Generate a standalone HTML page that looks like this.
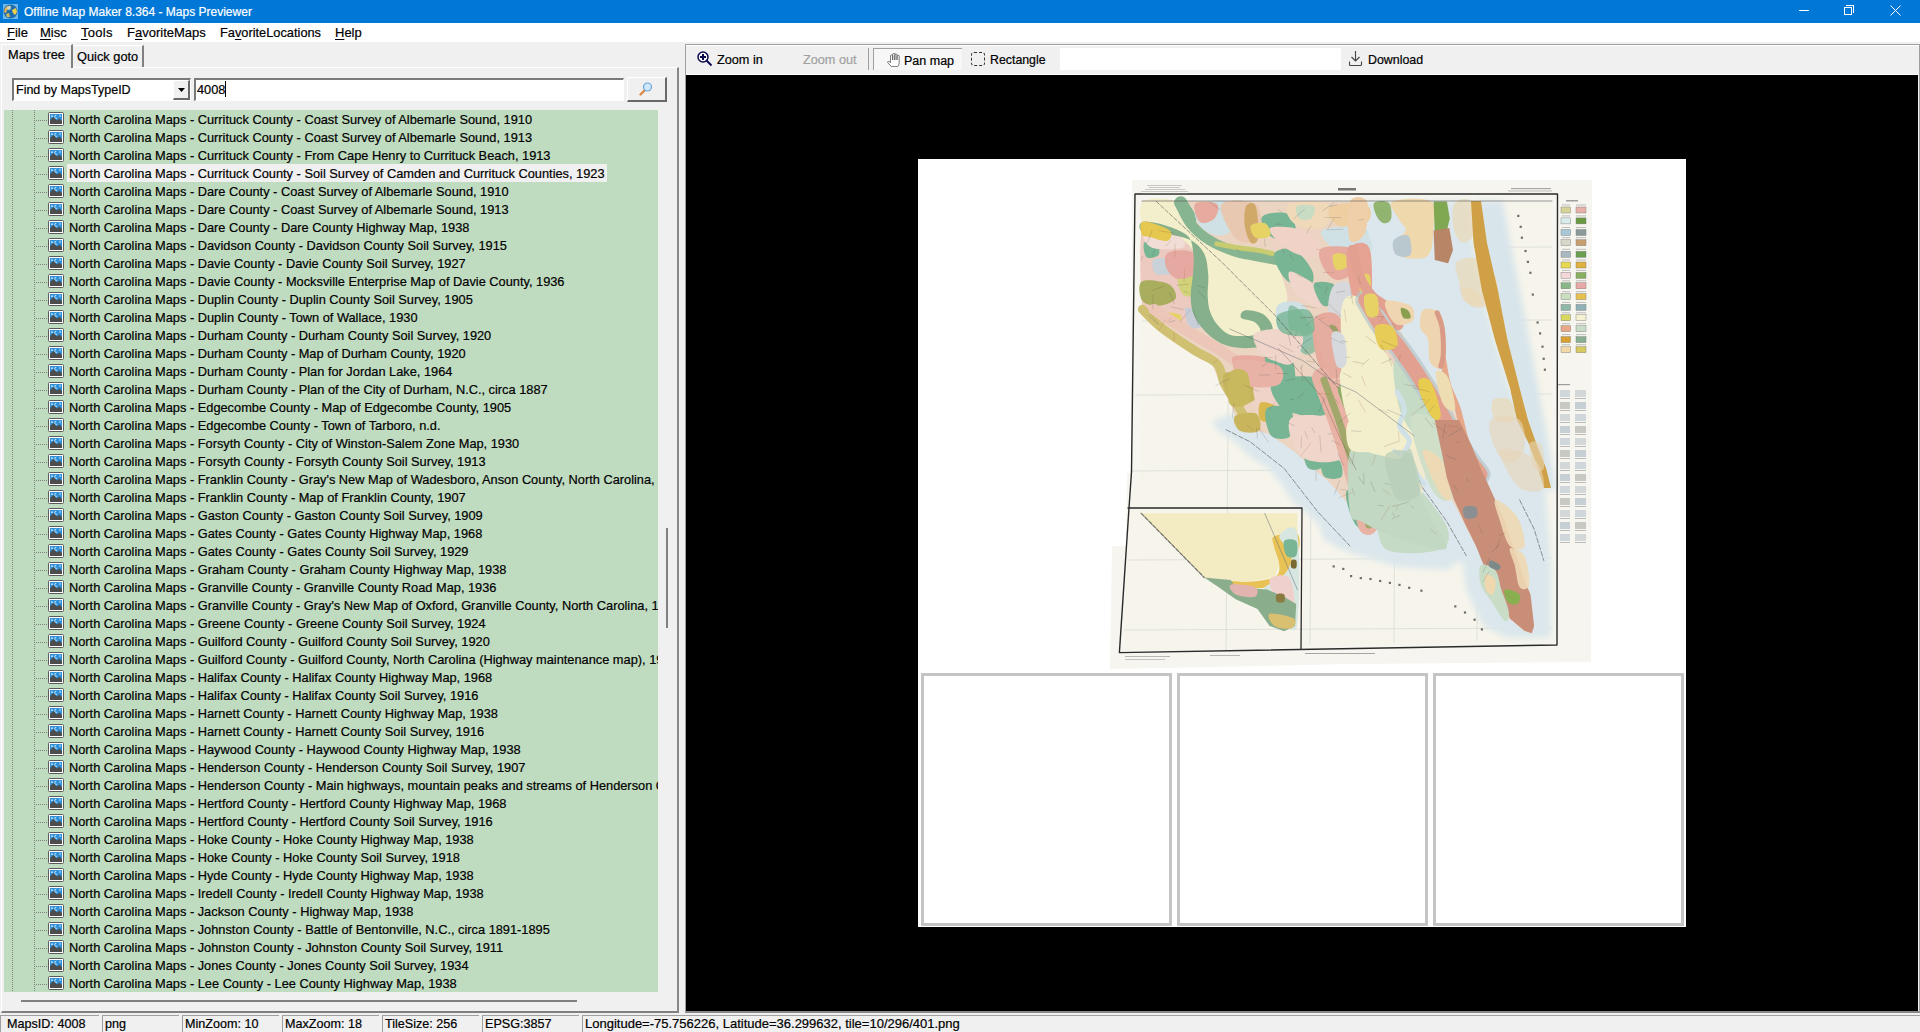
<!DOCTYPE html>
<html><head><meta charset="utf-8">
<style>
*{box-sizing:border-box}
html,body{margin:0;padding:0}
body{width:1920px;height:1032px;overflow:hidden;position:relative;background:#f0f0f0;font-family:"Liberation Sans",sans-serif;font-size:13px;color:#000;-webkit-text-stroke-width:0.2px}
.a{position:absolute}
.t{position:absolute;white-space:nowrap;line-height:16px}
#title{left:0;top:0;width:1920px;height:23px;background:#0078d7}
#menu{left:0;top:23px;width:1920px;height:19px;background:#fff}
.u{text-decoration:underline;text-underline-offset:2px}
.row{position:absolute;left:0;width:654px;height:18px}
.row .hd{position:absolute;left:32px;top:10px;width:12px;height:1px;background-image:linear-gradient(to right,#808080 50%,transparent 50%);background-size:2px 1px}
.row .ic{position:absolute;left:44px;top:1.5px}
.row .tx{position:absolute;left:63px;top:0;height:18px;line-height:20px;padding:0 2px 0 2px;white-space:nowrap;font-size:12.8px}
.row .tx.sel{background:#f0f0f0}
.vd{position:absolute;width:1px;background-image:linear-gradient(to bottom,#808080 50%,transparent 50%);background-size:1px 2px}
.sp{position:absolute;top:1015px;height:17px;border-top:1px solid #a0a0a0;border-left:1px solid #a0a0a0}
.sp span{position:absolute;left:2px;top:0px;line-height:16px;white-space:nowrap;font-size:12.6px}
</style></head><body>

<!-- title bar -->
<div id="title" class="a">
  <svg class="a" style="left:3px;top:4px" width="15" height="15" viewBox="0 0 15 15">
    <rect width="15" height="15" fill="#6fb7e8"/>
    <circle cx="7.5" cy="7.5" r="7" fill="#1f6fae"/>
    <path d="M2 4 Q5 1 8 2 L7 5 L4 6 L3 9 L1 8 Z" fill="#e9b24a"/>
    <path d="M9 6 L13 4 L14 8 L12 11 L10 9 Z" fill="#f2cf4a"/>
    <path d="M3 10 L6 9 L7 13 L4 13 Z" fill="#d9b85a"/>
    <circle cx="6" cy="4" r="2" fill="#bfe3f7" opacity=".7"/>
  </svg>
  <div class="t" style="left:24px;top:4px;color:#fff;font-size:12px">Offline Map Maker 8.364 - Maps Previewer</div>
  <!-- min -->
  <div class="a" style="left:1799px;top:10px;width:10px;height:1px;background:#fff"></div>
  <!-- restore -->
  <div class="a" style="left:1844px;top:7px;width:8px;height:8px;border:1px solid #fff"></div>
  <div class="a" style="left:1846px;top:5px;width:8px;height:8px;border-top:1px solid #fff;border-right:1px solid #fff"></div>
  <!-- close -->
  <svg class="a" style="left:1890px;top:5px" width="11" height="11" viewBox="0 0 11 11"><path d="M0.5 0.5 L10.5 10.5 M10.5 0.5 L0.5 10.5" stroke="#fff" stroke-width="1"/></svg>
</div>

<!-- menu -->
<div id="menu" class="a">
  <div class="t" style="left:7px;top:2px"><span class="u">F</span>ile</div>
  <div class="t" style="left:40px;top:2px"><span class="u">M</span>isc</div>
  <div class="t" style="left:81px;top:2px;letter-spacing:0.3px"><span class="u">T</span>ools</div>
  <div class="t" style="left:127px;top:2px">F<span class="u">a</span>voriteMaps</div>
  <div class="t" style="left:220px;top:2px;font-size:12.8px">Fa<span class="u">v</span>oriteLocations</div>
  <div class="t" style="left:335px;top:2px"><span class="u">H</span>elp</div>
</div>

<!-- left panel: tabs -->
<div class="a" style="left:1px;top:67px;width:678px;height:946px;border-top:1px solid #fff;border-left:1px solid #fff;border-right:2px solid #888;border-bottom:2px solid #808080"></div>
<div class="a" style="left:1px;top:44px;width:72px;height:24px;background:#f0f0f0;border-top:1px solid #fff;border-left:1px solid #fff;border-right:2px solid #808080"></div>
<div class="t" style="left:8px;top:47px;font-size:12.8px">Maps tree</div>
<div class="a" style="left:73px;top:45px;width:71px;height:22px;background:#f0f0f0;border-top:1px solid #fff;border-right:2px solid #808080"></div>
<div class="t" style="left:77px;top:49px;font-size:12.8px">Quick goto</div>

<!-- combo -->
<div class="a" style="left:12px;top:78px;width:179px;height:23px;background:#fff;border-top:2px solid #7a7a7a;border-left:2px solid #7a7a7a;border-bottom:1px solid #fff;border-right:1px solid #fff"></div>
<div class="t" style="left:16px;top:82px;font-size:12.5px">Find by MapsTypeID</div>
<div class="a" style="left:173px;top:80px;width:17px;height:20px;background:#f0f0f0;border-top:1px solid #fff;border-left:1px solid #fff;border-right:2px solid #696969;border-bottom:2px solid #696969"></div>
<svg class="a" style="left:178px;top:88px" width="7" height="4" viewBox="0 0 7 4"><path d="M0 0 H7 L3.5 4 Z" fill="#000"/></svg>
<!-- edit -->
<div class="a" style="left:194px;top:78px;width:430px;height:23px;background:#fff;border-top:2px solid #7a7a7a;border-left:2px solid #7a7a7a;border-bottom:1px solid #fff;border-right:1px solid #fff"></div>
<div class="t" style="left:197px;top:82px;font-size:12.8px">4008</div>
<div class="a" style="left:225px;top:81px;width:1px;height:16px;background:#000"></div>
<!-- search button -->
<div class="a" style="left:627px;top:77px;width:40px;height:25px;background:#f0f0f0;border-top:1px solid #fff;border-left:1px solid #fff;border-right:2px solid #696969;border-bottom:2px solid #696969"></div>
<svg class="a" style="left:638px;top:81px" width="16" height="16" viewBox="0 0 16 16">
  <line x1="2.5" y1="13.5" x2="6.5" y2="9.5" stroke="#d98a4a" stroke-width="2.4" stroke-linecap="round"/>
  <circle cx="9.5" cy="6" r="4" fill="#cfe8fb" stroke="#6aa6d8" stroke-width="1.2"/>
</svg>

<!-- tree -->
<div class="a" style="left:4px;top:110px;width:654px;height:882px;background:#c0dcc0;overflow:hidden">
<div class="vd" style="left:8px;top:0;height:882px"></div>
<div class="vd" style="left:30px;top:0;height:882px"></div>
<div class="row" style="top:0px"><div class="hd" ></div><svg class="ic" width="16" height="14" viewBox="0 0 16 14"><rect x="0.5" y="0.5" width="15" height="13" rx="1" fill="#fff" stroke="#5a5a5a"/><rect x="2" y="2" width="12" height="10" fill="#2f8fd8"/><path d="M2 12 L2 8 L5.5 5 L9 8.5 L11.5 6.5 L14 9 L14 12 Z" fill="#4d4d4d"/><circle cx="4" cy="4.2" r="0.9" fill="#cfeaff"/><path d="M8.3 3.2 a1.6 1.6 0 1 0 0.8 3" fill="none" stroke="#cfeaff" stroke-width="0.9"/><rect x="11.6" y="2.6" width="0.9" height="2.4" fill="#cfeaff"/></svg><span class="tx">North Carolina Maps - Currituck County - Coast Survey of Albemarle Sound, 1910</span></div>
<div class="row" style="top:18px"><div class="hd" ></div><svg class="ic" width="16" height="14" viewBox="0 0 16 14"><rect x="0.5" y="0.5" width="15" height="13" rx="1" fill="#fff" stroke="#5a5a5a"/><rect x="2" y="2" width="12" height="10" fill="#2f8fd8"/><path d="M2 12 L2 8 L5.5 5 L9 8.5 L11.5 6.5 L14 9 L14 12 Z" fill="#4d4d4d"/><circle cx="4" cy="4.2" r="0.9" fill="#cfeaff"/><path d="M8.3 3.2 a1.6 1.6 0 1 0 0.8 3" fill="none" stroke="#cfeaff" stroke-width="0.9"/><rect x="11.6" y="2.6" width="0.9" height="2.4" fill="#cfeaff"/></svg><span class="tx">North Carolina Maps - Currituck County - Coast Survey of Albemarle Sound, 1913</span></div>
<div class="row" style="top:36px"><div class="hd" ></div><svg class="ic" width="16" height="14" viewBox="0 0 16 14"><rect x="0.5" y="0.5" width="15" height="13" rx="1" fill="#fff" stroke="#5a5a5a"/><rect x="2" y="2" width="12" height="10" fill="#2f8fd8"/><path d="M2 12 L2 8 L5.5 5 L9 8.5 L11.5 6.5 L14 9 L14 12 Z" fill="#4d4d4d"/><circle cx="4" cy="4.2" r="0.9" fill="#cfeaff"/><path d="M8.3 3.2 a1.6 1.6 0 1 0 0.8 3" fill="none" stroke="#cfeaff" stroke-width="0.9"/><rect x="11.6" y="2.6" width="0.9" height="2.4" fill="#cfeaff"/></svg><span class="tx">North Carolina Maps - Currituck County - From Cape Henry to Currituck Beach, 1913</span></div>
<div class="row" style="top:54px"><div class="hd" ></div><svg class="ic" width="16" height="14" viewBox="0 0 16 14"><rect x="0.5" y="0.5" width="15" height="13" rx="1" fill="#fff" stroke="#5a5a5a"/><rect x="2" y="2" width="12" height="10" fill="#2f8fd8"/><path d="M2 12 L2 8 L5.5 5 L9 8.5 L11.5 6.5 L14 9 L14 12 Z" fill="#4d4d4d"/><circle cx="4" cy="4.2" r="0.9" fill="#cfeaff"/><path d="M8.3 3.2 a1.6 1.6 0 1 0 0.8 3" fill="none" stroke="#cfeaff" stroke-width="0.9"/><rect x="11.6" y="2.6" width="0.9" height="2.4" fill="#cfeaff"/></svg><span class="tx sel">North Carolina Maps - Currituck County - Soil Survey of Camden and Currituck Counties, 1923</span></div>
<div class="row" style="top:72px"><div class="hd" ></div><svg class="ic" width="16" height="14" viewBox="0 0 16 14"><rect x="0.5" y="0.5" width="15" height="13" rx="1" fill="#fff" stroke="#5a5a5a"/><rect x="2" y="2" width="12" height="10" fill="#2f8fd8"/><path d="M2 12 L2 8 L5.5 5 L9 8.5 L11.5 6.5 L14 9 L14 12 Z" fill="#4d4d4d"/><circle cx="4" cy="4.2" r="0.9" fill="#cfeaff"/><path d="M8.3 3.2 a1.6 1.6 0 1 0 0.8 3" fill="none" stroke="#cfeaff" stroke-width="0.9"/><rect x="11.6" y="2.6" width="0.9" height="2.4" fill="#cfeaff"/></svg><span class="tx">North Carolina Maps - Dare County - Coast Survey of Albemarle Sound, 1910</span></div>
<div class="row" style="top:90px"><div class="hd" ></div><svg class="ic" width="16" height="14" viewBox="0 0 16 14"><rect x="0.5" y="0.5" width="15" height="13" rx="1" fill="#fff" stroke="#5a5a5a"/><rect x="2" y="2" width="12" height="10" fill="#2f8fd8"/><path d="M2 12 L2 8 L5.5 5 L9 8.5 L11.5 6.5 L14 9 L14 12 Z" fill="#4d4d4d"/><circle cx="4" cy="4.2" r="0.9" fill="#cfeaff"/><path d="M8.3 3.2 a1.6 1.6 0 1 0 0.8 3" fill="none" stroke="#cfeaff" stroke-width="0.9"/><rect x="11.6" y="2.6" width="0.9" height="2.4" fill="#cfeaff"/></svg><span class="tx">North Carolina Maps - Dare County - Coast Survey of Albemarle Sound, 1913</span></div>
<div class="row" style="top:108px"><div class="hd" ></div><svg class="ic" width="16" height="14" viewBox="0 0 16 14"><rect x="0.5" y="0.5" width="15" height="13" rx="1" fill="#fff" stroke="#5a5a5a"/><rect x="2" y="2" width="12" height="10" fill="#2f8fd8"/><path d="M2 12 L2 8 L5.5 5 L9 8.5 L11.5 6.5 L14 9 L14 12 Z" fill="#4d4d4d"/><circle cx="4" cy="4.2" r="0.9" fill="#cfeaff"/><path d="M8.3 3.2 a1.6 1.6 0 1 0 0.8 3" fill="none" stroke="#cfeaff" stroke-width="0.9"/><rect x="11.6" y="2.6" width="0.9" height="2.4" fill="#cfeaff"/></svg><span class="tx">North Carolina Maps - Dare County - Dare County Highway Map, 1938</span></div>
<div class="row" style="top:126px"><div class="hd" ></div><svg class="ic" width="16" height="14" viewBox="0 0 16 14"><rect x="0.5" y="0.5" width="15" height="13" rx="1" fill="#fff" stroke="#5a5a5a"/><rect x="2" y="2" width="12" height="10" fill="#2f8fd8"/><path d="M2 12 L2 8 L5.5 5 L9 8.5 L11.5 6.5 L14 9 L14 12 Z" fill="#4d4d4d"/><circle cx="4" cy="4.2" r="0.9" fill="#cfeaff"/><path d="M8.3 3.2 a1.6 1.6 0 1 0 0.8 3" fill="none" stroke="#cfeaff" stroke-width="0.9"/><rect x="11.6" y="2.6" width="0.9" height="2.4" fill="#cfeaff"/></svg><span class="tx">North Carolina Maps - Davidson County - Davidson County Soil Survey, 1915</span></div>
<div class="row" style="top:144px"><div class="hd" ></div><svg class="ic" width="16" height="14" viewBox="0 0 16 14"><rect x="0.5" y="0.5" width="15" height="13" rx="1" fill="#fff" stroke="#5a5a5a"/><rect x="2" y="2" width="12" height="10" fill="#2f8fd8"/><path d="M2 12 L2 8 L5.5 5 L9 8.5 L11.5 6.5 L14 9 L14 12 Z" fill="#4d4d4d"/><circle cx="4" cy="4.2" r="0.9" fill="#cfeaff"/><path d="M8.3 3.2 a1.6 1.6 0 1 0 0.8 3" fill="none" stroke="#cfeaff" stroke-width="0.9"/><rect x="11.6" y="2.6" width="0.9" height="2.4" fill="#cfeaff"/></svg><span class="tx">North Carolina Maps - Davie County - Davie County Soil Survey, 1927</span></div>
<div class="row" style="top:162px"><div class="hd" ></div><svg class="ic" width="16" height="14" viewBox="0 0 16 14"><rect x="0.5" y="0.5" width="15" height="13" rx="1" fill="#fff" stroke="#5a5a5a"/><rect x="2" y="2" width="12" height="10" fill="#2f8fd8"/><path d="M2 12 L2 8 L5.5 5 L9 8.5 L11.5 6.5 L14 9 L14 12 Z" fill="#4d4d4d"/><circle cx="4" cy="4.2" r="0.9" fill="#cfeaff"/><path d="M8.3 3.2 a1.6 1.6 0 1 0 0.8 3" fill="none" stroke="#cfeaff" stroke-width="0.9"/><rect x="11.6" y="2.6" width="0.9" height="2.4" fill="#cfeaff"/></svg><span class="tx">North Carolina Maps - Davie County - Mocksville Enterprise Map of Davie County, 1936</span></div>
<div class="row" style="top:180px"><div class="hd" ></div><svg class="ic" width="16" height="14" viewBox="0 0 16 14"><rect x="0.5" y="0.5" width="15" height="13" rx="1" fill="#fff" stroke="#5a5a5a"/><rect x="2" y="2" width="12" height="10" fill="#2f8fd8"/><path d="M2 12 L2 8 L5.5 5 L9 8.5 L11.5 6.5 L14 9 L14 12 Z" fill="#4d4d4d"/><circle cx="4" cy="4.2" r="0.9" fill="#cfeaff"/><path d="M8.3 3.2 a1.6 1.6 0 1 0 0.8 3" fill="none" stroke="#cfeaff" stroke-width="0.9"/><rect x="11.6" y="2.6" width="0.9" height="2.4" fill="#cfeaff"/></svg><span class="tx">North Carolina Maps - Duplin County - Duplin County Soil Survey, 1905</span></div>
<div class="row" style="top:198px"><div class="hd" ></div><svg class="ic" width="16" height="14" viewBox="0 0 16 14"><rect x="0.5" y="0.5" width="15" height="13" rx="1" fill="#fff" stroke="#5a5a5a"/><rect x="2" y="2" width="12" height="10" fill="#2f8fd8"/><path d="M2 12 L2 8 L5.5 5 L9 8.5 L11.5 6.5 L14 9 L14 12 Z" fill="#4d4d4d"/><circle cx="4" cy="4.2" r="0.9" fill="#cfeaff"/><path d="M8.3 3.2 a1.6 1.6 0 1 0 0.8 3" fill="none" stroke="#cfeaff" stroke-width="0.9"/><rect x="11.6" y="2.6" width="0.9" height="2.4" fill="#cfeaff"/></svg><span class="tx">North Carolina Maps - Duplin County - Town of Wallace, 1930</span></div>
<div class="row" style="top:216px"><div class="hd" ></div><svg class="ic" width="16" height="14" viewBox="0 0 16 14"><rect x="0.5" y="0.5" width="15" height="13" rx="1" fill="#fff" stroke="#5a5a5a"/><rect x="2" y="2" width="12" height="10" fill="#2f8fd8"/><path d="M2 12 L2 8 L5.5 5 L9 8.5 L11.5 6.5 L14 9 L14 12 Z" fill="#4d4d4d"/><circle cx="4" cy="4.2" r="0.9" fill="#cfeaff"/><path d="M8.3 3.2 a1.6 1.6 0 1 0 0.8 3" fill="none" stroke="#cfeaff" stroke-width="0.9"/><rect x="11.6" y="2.6" width="0.9" height="2.4" fill="#cfeaff"/></svg><span class="tx">North Carolina Maps - Durham County - Durham County Soil Survey, 1920</span></div>
<div class="row" style="top:234px"><div class="hd" ></div><svg class="ic" width="16" height="14" viewBox="0 0 16 14"><rect x="0.5" y="0.5" width="15" height="13" rx="1" fill="#fff" stroke="#5a5a5a"/><rect x="2" y="2" width="12" height="10" fill="#2f8fd8"/><path d="M2 12 L2 8 L5.5 5 L9 8.5 L11.5 6.5 L14 9 L14 12 Z" fill="#4d4d4d"/><circle cx="4" cy="4.2" r="0.9" fill="#cfeaff"/><path d="M8.3 3.2 a1.6 1.6 0 1 0 0.8 3" fill="none" stroke="#cfeaff" stroke-width="0.9"/><rect x="11.6" y="2.6" width="0.9" height="2.4" fill="#cfeaff"/></svg><span class="tx">North Carolina Maps - Durham County - Map of Durham County, 1920</span></div>
<div class="row" style="top:252px"><div class="hd" ></div><svg class="ic" width="16" height="14" viewBox="0 0 16 14"><rect x="0.5" y="0.5" width="15" height="13" rx="1" fill="#fff" stroke="#5a5a5a"/><rect x="2" y="2" width="12" height="10" fill="#2f8fd8"/><path d="M2 12 L2 8 L5.5 5 L9 8.5 L11.5 6.5 L14 9 L14 12 Z" fill="#4d4d4d"/><circle cx="4" cy="4.2" r="0.9" fill="#cfeaff"/><path d="M8.3 3.2 a1.6 1.6 0 1 0 0.8 3" fill="none" stroke="#cfeaff" stroke-width="0.9"/><rect x="11.6" y="2.6" width="0.9" height="2.4" fill="#cfeaff"/></svg><span class="tx">North Carolina Maps - Durham County - Plan for Jordan Lake, 1964</span></div>
<div class="row" style="top:270px"><div class="hd" ></div><svg class="ic" width="16" height="14" viewBox="0 0 16 14"><rect x="0.5" y="0.5" width="15" height="13" rx="1" fill="#fff" stroke="#5a5a5a"/><rect x="2" y="2" width="12" height="10" fill="#2f8fd8"/><path d="M2 12 L2 8 L5.5 5 L9 8.5 L11.5 6.5 L14 9 L14 12 Z" fill="#4d4d4d"/><circle cx="4" cy="4.2" r="0.9" fill="#cfeaff"/><path d="M8.3 3.2 a1.6 1.6 0 1 0 0.8 3" fill="none" stroke="#cfeaff" stroke-width="0.9"/><rect x="11.6" y="2.6" width="0.9" height="2.4" fill="#cfeaff"/></svg><span class="tx">North Carolina Maps - Durham County - Plan of the City of Durham, N.C., circa 1887</span></div>
<div class="row" style="top:288px"><div class="hd" ></div><svg class="ic" width="16" height="14" viewBox="0 0 16 14"><rect x="0.5" y="0.5" width="15" height="13" rx="1" fill="#fff" stroke="#5a5a5a"/><rect x="2" y="2" width="12" height="10" fill="#2f8fd8"/><path d="M2 12 L2 8 L5.5 5 L9 8.5 L11.5 6.5 L14 9 L14 12 Z" fill="#4d4d4d"/><circle cx="4" cy="4.2" r="0.9" fill="#cfeaff"/><path d="M8.3 3.2 a1.6 1.6 0 1 0 0.8 3" fill="none" stroke="#cfeaff" stroke-width="0.9"/><rect x="11.6" y="2.6" width="0.9" height="2.4" fill="#cfeaff"/></svg><span class="tx">North Carolina Maps - Edgecombe County - Map of Edgecombe County, 1905</span></div>
<div class="row" style="top:306px"><div class="hd" ></div><svg class="ic" width="16" height="14" viewBox="0 0 16 14"><rect x="0.5" y="0.5" width="15" height="13" rx="1" fill="#fff" stroke="#5a5a5a"/><rect x="2" y="2" width="12" height="10" fill="#2f8fd8"/><path d="M2 12 L2 8 L5.5 5 L9 8.5 L11.5 6.5 L14 9 L14 12 Z" fill="#4d4d4d"/><circle cx="4" cy="4.2" r="0.9" fill="#cfeaff"/><path d="M8.3 3.2 a1.6 1.6 0 1 0 0.8 3" fill="none" stroke="#cfeaff" stroke-width="0.9"/><rect x="11.6" y="2.6" width="0.9" height="2.4" fill="#cfeaff"/></svg><span class="tx">North Carolina Maps - Edgecombe County - Town of Tarboro, n.d.</span></div>
<div class="row" style="top:324px"><div class="hd" ></div><svg class="ic" width="16" height="14" viewBox="0 0 16 14"><rect x="0.5" y="0.5" width="15" height="13" rx="1" fill="#fff" stroke="#5a5a5a"/><rect x="2" y="2" width="12" height="10" fill="#2f8fd8"/><path d="M2 12 L2 8 L5.5 5 L9 8.5 L11.5 6.5 L14 9 L14 12 Z" fill="#4d4d4d"/><circle cx="4" cy="4.2" r="0.9" fill="#cfeaff"/><path d="M8.3 3.2 a1.6 1.6 0 1 0 0.8 3" fill="none" stroke="#cfeaff" stroke-width="0.9"/><rect x="11.6" y="2.6" width="0.9" height="2.4" fill="#cfeaff"/></svg><span class="tx">North Carolina Maps - Forsyth County - City of Winston-Salem Zone Map, 1930</span></div>
<div class="row" style="top:342px"><div class="hd" ></div><svg class="ic" width="16" height="14" viewBox="0 0 16 14"><rect x="0.5" y="0.5" width="15" height="13" rx="1" fill="#fff" stroke="#5a5a5a"/><rect x="2" y="2" width="12" height="10" fill="#2f8fd8"/><path d="M2 12 L2 8 L5.5 5 L9 8.5 L11.5 6.5 L14 9 L14 12 Z" fill="#4d4d4d"/><circle cx="4" cy="4.2" r="0.9" fill="#cfeaff"/><path d="M8.3 3.2 a1.6 1.6 0 1 0 0.8 3" fill="none" stroke="#cfeaff" stroke-width="0.9"/><rect x="11.6" y="2.6" width="0.9" height="2.4" fill="#cfeaff"/></svg><span class="tx">North Carolina Maps - Forsyth County - Forsyth County Soil Survey, 1913</span></div>
<div class="row" style="top:360px"><div class="hd" ></div><svg class="ic" width="16" height="14" viewBox="0 0 16 14"><rect x="0.5" y="0.5" width="15" height="13" rx="1" fill="#fff" stroke="#5a5a5a"/><rect x="2" y="2" width="12" height="10" fill="#2f8fd8"/><path d="M2 12 L2 8 L5.5 5 L9 8.5 L11.5 6.5 L14 9 L14 12 Z" fill="#4d4d4d"/><circle cx="4" cy="4.2" r="0.9" fill="#cfeaff"/><path d="M8.3 3.2 a1.6 1.6 0 1 0 0.8 3" fill="none" stroke="#cfeaff" stroke-width="0.9"/><rect x="11.6" y="2.6" width="0.9" height="2.4" fill="#cfeaff"/></svg><span class="tx">North Carolina Maps - Franklin County - Gray&#x27;s New Map of Wadesboro, Anson County, North Carolina, 1880</span></div>
<div class="row" style="top:378px"><div class="hd" ></div><svg class="ic" width="16" height="14" viewBox="0 0 16 14"><rect x="0.5" y="0.5" width="15" height="13" rx="1" fill="#fff" stroke="#5a5a5a"/><rect x="2" y="2" width="12" height="10" fill="#2f8fd8"/><path d="M2 12 L2 8 L5.5 5 L9 8.5 L11.5 6.5 L14 9 L14 12 Z" fill="#4d4d4d"/><circle cx="4" cy="4.2" r="0.9" fill="#cfeaff"/><path d="M8.3 3.2 a1.6 1.6 0 1 0 0.8 3" fill="none" stroke="#cfeaff" stroke-width="0.9"/><rect x="11.6" y="2.6" width="0.9" height="2.4" fill="#cfeaff"/></svg><span class="tx">North Carolina Maps - Franklin County - Map of Franklin County, 1907</span></div>
<div class="row" style="top:396px"><div class="hd" ></div><svg class="ic" width="16" height="14" viewBox="0 0 16 14"><rect x="0.5" y="0.5" width="15" height="13" rx="1" fill="#fff" stroke="#5a5a5a"/><rect x="2" y="2" width="12" height="10" fill="#2f8fd8"/><path d="M2 12 L2 8 L5.5 5 L9 8.5 L11.5 6.5 L14 9 L14 12 Z" fill="#4d4d4d"/><circle cx="4" cy="4.2" r="0.9" fill="#cfeaff"/><path d="M8.3 3.2 a1.6 1.6 0 1 0 0.8 3" fill="none" stroke="#cfeaff" stroke-width="0.9"/><rect x="11.6" y="2.6" width="0.9" height="2.4" fill="#cfeaff"/></svg><span class="tx">North Carolina Maps - Gaston County - Gaston County Soil Survey, 1909</span></div>
<div class="row" style="top:414px"><div class="hd" ></div><svg class="ic" width="16" height="14" viewBox="0 0 16 14"><rect x="0.5" y="0.5" width="15" height="13" rx="1" fill="#fff" stroke="#5a5a5a"/><rect x="2" y="2" width="12" height="10" fill="#2f8fd8"/><path d="M2 12 L2 8 L5.5 5 L9 8.5 L11.5 6.5 L14 9 L14 12 Z" fill="#4d4d4d"/><circle cx="4" cy="4.2" r="0.9" fill="#cfeaff"/><path d="M8.3 3.2 a1.6 1.6 0 1 0 0.8 3" fill="none" stroke="#cfeaff" stroke-width="0.9"/><rect x="11.6" y="2.6" width="0.9" height="2.4" fill="#cfeaff"/></svg><span class="tx">North Carolina Maps - Gates County - Gates County Highway Map, 1968</span></div>
<div class="row" style="top:432px"><div class="hd" ></div><svg class="ic" width="16" height="14" viewBox="0 0 16 14"><rect x="0.5" y="0.5" width="15" height="13" rx="1" fill="#fff" stroke="#5a5a5a"/><rect x="2" y="2" width="12" height="10" fill="#2f8fd8"/><path d="M2 12 L2 8 L5.5 5 L9 8.5 L11.5 6.5 L14 9 L14 12 Z" fill="#4d4d4d"/><circle cx="4" cy="4.2" r="0.9" fill="#cfeaff"/><path d="M8.3 3.2 a1.6 1.6 0 1 0 0.8 3" fill="none" stroke="#cfeaff" stroke-width="0.9"/><rect x="11.6" y="2.6" width="0.9" height="2.4" fill="#cfeaff"/></svg><span class="tx">North Carolina Maps - Gates County - Gates County Soil Survey, 1929</span></div>
<div class="row" style="top:450px"><div class="hd" ></div><svg class="ic" width="16" height="14" viewBox="0 0 16 14"><rect x="0.5" y="0.5" width="15" height="13" rx="1" fill="#fff" stroke="#5a5a5a"/><rect x="2" y="2" width="12" height="10" fill="#2f8fd8"/><path d="M2 12 L2 8 L5.5 5 L9 8.5 L11.5 6.5 L14 9 L14 12 Z" fill="#4d4d4d"/><circle cx="4" cy="4.2" r="0.9" fill="#cfeaff"/><path d="M8.3 3.2 a1.6 1.6 0 1 0 0.8 3" fill="none" stroke="#cfeaff" stroke-width="0.9"/><rect x="11.6" y="2.6" width="0.9" height="2.4" fill="#cfeaff"/></svg><span class="tx">North Carolina Maps - Graham County - Graham County Highway Map, 1938</span></div>
<div class="row" style="top:468px"><div class="hd" ></div><svg class="ic" width="16" height="14" viewBox="0 0 16 14"><rect x="0.5" y="0.5" width="15" height="13" rx="1" fill="#fff" stroke="#5a5a5a"/><rect x="2" y="2" width="12" height="10" fill="#2f8fd8"/><path d="M2 12 L2 8 L5.5 5 L9 8.5 L11.5 6.5 L14 9 L14 12 Z" fill="#4d4d4d"/><circle cx="4" cy="4.2" r="0.9" fill="#cfeaff"/><path d="M8.3 3.2 a1.6 1.6 0 1 0 0.8 3" fill="none" stroke="#cfeaff" stroke-width="0.9"/><rect x="11.6" y="2.6" width="0.9" height="2.4" fill="#cfeaff"/></svg><span class="tx">North Carolina Maps - Granville County - Granville County Road Map, 1936</span></div>
<div class="row" style="top:486px"><div class="hd" ></div><svg class="ic" width="16" height="14" viewBox="0 0 16 14"><rect x="0.5" y="0.5" width="15" height="13" rx="1" fill="#fff" stroke="#5a5a5a"/><rect x="2" y="2" width="12" height="10" fill="#2f8fd8"/><path d="M2 12 L2 8 L5.5 5 L9 8.5 L11.5 6.5 L14 9 L14 12 Z" fill="#4d4d4d"/><circle cx="4" cy="4.2" r="0.9" fill="#cfeaff"/><path d="M8.3 3.2 a1.6 1.6 0 1 0 0.8 3" fill="none" stroke="#cfeaff" stroke-width="0.9"/><rect x="11.6" y="2.6" width="0.9" height="2.4" fill="#cfeaff"/></svg><span class="tx">North Carolina Maps - Granville County - Gray&#x27;s New Map of Oxford, Granville County, North Carolina, 1886</span></div>
<div class="row" style="top:504px"><div class="hd" ></div><svg class="ic" width="16" height="14" viewBox="0 0 16 14"><rect x="0.5" y="0.5" width="15" height="13" rx="1" fill="#fff" stroke="#5a5a5a"/><rect x="2" y="2" width="12" height="10" fill="#2f8fd8"/><path d="M2 12 L2 8 L5.5 5 L9 8.5 L11.5 6.5 L14 9 L14 12 Z" fill="#4d4d4d"/><circle cx="4" cy="4.2" r="0.9" fill="#cfeaff"/><path d="M8.3 3.2 a1.6 1.6 0 1 0 0.8 3" fill="none" stroke="#cfeaff" stroke-width="0.9"/><rect x="11.6" y="2.6" width="0.9" height="2.4" fill="#cfeaff"/></svg><span class="tx">North Carolina Maps - Greene County - Greene County Soil Survey, 1924</span></div>
<div class="row" style="top:522px"><div class="hd" ></div><svg class="ic" width="16" height="14" viewBox="0 0 16 14"><rect x="0.5" y="0.5" width="15" height="13" rx="1" fill="#fff" stroke="#5a5a5a"/><rect x="2" y="2" width="12" height="10" fill="#2f8fd8"/><path d="M2 12 L2 8 L5.5 5 L9 8.5 L11.5 6.5 L14 9 L14 12 Z" fill="#4d4d4d"/><circle cx="4" cy="4.2" r="0.9" fill="#cfeaff"/><path d="M8.3 3.2 a1.6 1.6 0 1 0 0.8 3" fill="none" stroke="#cfeaff" stroke-width="0.9"/><rect x="11.6" y="2.6" width="0.9" height="2.4" fill="#cfeaff"/></svg><span class="tx">North Carolina Maps - Guilford County - Guilford County Soil Survey, 1920</span></div>
<div class="row" style="top:540px"><div class="hd" ></div><svg class="ic" width="16" height="14" viewBox="0 0 16 14"><rect x="0.5" y="0.5" width="15" height="13" rx="1" fill="#fff" stroke="#5a5a5a"/><rect x="2" y="2" width="12" height="10" fill="#2f8fd8"/><path d="M2 12 L2 8 L5.5 5 L9 8.5 L11.5 6.5 L14 9 L14 12 Z" fill="#4d4d4d"/><circle cx="4" cy="4.2" r="0.9" fill="#cfeaff"/><path d="M8.3 3.2 a1.6 1.6 0 1 0 0.8 3" fill="none" stroke="#cfeaff" stroke-width="0.9"/><rect x="11.6" y="2.6" width="0.9" height="2.4" fill="#cfeaff"/></svg><span class="tx">North Carolina Maps - Guilford County - Guilford County, North Carolina (Highway maintenance map), 1938</span></div>
<div class="row" style="top:558px"><div class="hd" ></div><svg class="ic" width="16" height="14" viewBox="0 0 16 14"><rect x="0.5" y="0.5" width="15" height="13" rx="1" fill="#fff" stroke="#5a5a5a"/><rect x="2" y="2" width="12" height="10" fill="#2f8fd8"/><path d="M2 12 L2 8 L5.5 5 L9 8.5 L11.5 6.5 L14 9 L14 12 Z" fill="#4d4d4d"/><circle cx="4" cy="4.2" r="0.9" fill="#cfeaff"/><path d="M8.3 3.2 a1.6 1.6 0 1 0 0.8 3" fill="none" stroke="#cfeaff" stroke-width="0.9"/><rect x="11.6" y="2.6" width="0.9" height="2.4" fill="#cfeaff"/></svg><span class="tx">North Carolina Maps - Halifax County - Halifax County Highway Map, 1968</span></div>
<div class="row" style="top:576px"><div class="hd" ></div><svg class="ic" width="16" height="14" viewBox="0 0 16 14"><rect x="0.5" y="0.5" width="15" height="13" rx="1" fill="#fff" stroke="#5a5a5a"/><rect x="2" y="2" width="12" height="10" fill="#2f8fd8"/><path d="M2 12 L2 8 L5.5 5 L9 8.5 L11.5 6.5 L14 9 L14 12 Z" fill="#4d4d4d"/><circle cx="4" cy="4.2" r="0.9" fill="#cfeaff"/><path d="M8.3 3.2 a1.6 1.6 0 1 0 0.8 3" fill="none" stroke="#cfeaff" stroke-width="0.9"/><rect x="11.6" y="2.6" width="0.9" height="2.4" fill="#cfeaff"/></svg><span class="tx">North Carolina Maps - Halifax County - Halifax County Soil Survey, 1916</span></div>
<div class="row" style="top:594px"><div class="hd" ></div><svg class="ic" width="16" height="14" viewBox="0 0 16 14"><rect x="0.5" y="0.5" width="15" height="13" rx="1" fill="#fff" stroke="#5a5a5a"/><rect x="2" y="2" width="12" height="10" fill="#2f8fd8"/><path d="M2 12 L2 8 L5.5 5 L9 8.5 L11.5 6.5 L14 9 L14 12 Z" fill="#4d4d4d"/><circle cx="4" cy="4.2" r="0.9" fill="#cfeaff"/><path d="M8.3 3.2 a1.6 1.6 0 1 0 0.8 3" fill="none" stroke="#cfeaff" stroke-width="0.9"/><rect x="11.6" y="2.6" width="0.9" height="2.4" fill="#cfeaff"/></svg><span class="tx">North Carolina Maps - Harnett County - Harnett County Highway Map, 1938</span></div>
<div class="row" style="top:612px"><div class="hd" ></div><svg class="ic" width="16" height="14" viewBox="0 0 16 14"><rect x="0.5" y="0.5" width="15" height="13" rx="1" fill="#fff" stroke="#5a5a5a"/><rect x="2" y="2" width="12" height="10" fill="#2f8fd8"/><path d="M2 12 L2 8 L5.5 5 L9 8.5 L11.5 6.5 L14 9 L14 12 Z" fill="#4d4d4d"/><circle cx="4" cy="4.2" r="0.9" fill="#cfeaff"/><path d="M8.3 3.2 a1.6 1.6 0 1 0 0.8 3" fill="none" stroke="#cfeaff" stroke-width="0.9"/><rect x="11.6" y="2.6" width="0.9" height="2.4" fill="#cfeaff"/></svg><span class="tx">North Carolina Maps - Harnett County - Harnett County Soil Survey, 1916</span></div>
<div class="row" style="top:630px"><div class="hd" ></div><svg class="ic" width="16" height="14" viewBox="0 0 16 14"><rect x="0.5" y="0.5" width="15" height="13" rx="1" fill="#fff" stroke="#5a5a5a"/><rect x="2" y="2" width="12" height="10" fill="#2f8fd8"/><path d="M2 12 L2 8 L5.5 5 L9 8.5 L11.5 6.5 L14 9 L14 12 Z" fill="#4d4d4d"/><circle cx="4" cy="4.2" r="0.9" fill="#cfeaff"/><path d="M8.3 3.2 a1.6 1.6 0 1 0 0.8 3" fill="none" stroke="#cfeaff" stroke-width="0.9"/><rect x="11.6" y="2.6" width="0.9" height="2.4" fill="#cfeaff"/></svg><span class="tx">North Carolina Maps - Haywood County - Haywood County Highway Map, 1938</span></div>
<div class="row" style="top:648px"><div class="hd" ></div><svg class="ic" width="16" height="14" viewBox="0 0 16 14"><rect x="0.5" y="0.5" width="15" height="13" rx="1" fill="#fff" stroke="#5a5a5a"/><rect x="2" y="2" width="12" height="10" fill="#2f8fd8"/><path d="M2 12 L2 8 L5.5 5 L9 8.5 L11.5 6.5 L14 9 L14 12 Z" fill="#4d4d4d"/><circle cx="4" cy="4.2" r="0.9" fill="#cfeaff"/><path d="M8.3 3.2 a1.6 1.6 0 1 0 0.8 3" fill="none" stroke="#cfeaff" stroke-width="0.9"/><rect x="11.6" y="2.6" width="0.9" height="2.4" fill="#cfeaff"/></svg><span class="tx">North Carolina Maps - Henderson County - Henderson County Soil Survey, 1907</span></div>
<div class="row" style="top:666px"><div class="hd" ></div><svg class="ic" width="16" height="14" viewBox="0 0 16 14"><rect x="0.5" y="0.5" width="15" height="13" rx="1" fill="#fff" stroke="#5a5a5a"/><rect x="2" y="2" width="12" height="10" fill="#2f8fd8"/><path d="M2 12 L2 8 L5.5 5 L9 8.5 L11.5 6.5 L14 9 L14 12 Z" fill="#4d4d4d"/><circle cx="4" cy="4.2" r="0.9" fill="#cfeaff"/><path d="M8.3 3.2 a1.6 1.6 0 1 0 0.8 3" fill="none" stroke="#cfeaff" stroke-width="0.9"/><rect x="11.6" y="2.6" width="0.9" height="2.4" fill="#cfeaff"/></svg><span class="tx">North Carolina Maps - Henderson County - Main highways, mountain peaks and streams of Henderson County</span></div>
<div class="row" style="top:684px"><div class="hd" ></div><svg class="ic" width="16" height="14" viewBox="0 0 16 14"><rect x="0.5" y="0.5" width="15" height="13" rx="1" fill="#fff" stroke="#5a5a5a"/><rect x="2" y="2" width="12" height="10" fill="#2f8fd8"/><path d="M2 12 L2 8 L5.5 5 L9 8.5 L11.5 6.5 L14 9 L14 12 Z" fill="#4d4d4d"/><circle cx="4" cy="4.2" r="0.9" fill="#cfeaff"/><path d="M8.3 3.2 a1.6 1.6 0 1 0 0.8 3" fill="none" stroke="#cfeaff" stroke-width="0.9"/><rect x="11.6" y="2.6" width="0.9" height="2.4" fill="#cfeaff"/></svg><span class="tx">North Carolina Maps - Hertford County - Hertford County Highway Map, 1968</span></div>
<div class="row" style="top:702px"><div class="hd" ></div><svg class="ic" width="16" height="14" viewBox="0 0 16 14"><rect x="0.5" y="0.5" width="15" height="13" rx="1" fill="#fff" stroke="#5a5a5a"/><rect x="2" y="2" width="12" height="10" fill="#2f8fd8"/><path d="M2 12 L2 8 L5.5 5 L9 8.5 L11.5 6.5 L14 9 L14 12 Z" fill="#4d4d4d"/><circle cx="4" cy="4.2" r="0.9" fill="#cfeaff"/><path d="M8.3 3.2 a1.6 1.6 0 1 0 0.8 3" fill="none" stroke="#cfeaff" stroke-width="0.9"/><rect x="11.6" y="2.6" width="0.9" height="2.4" fill="#cfeaff"/></svg><span class="tx">North Carolina Maps - Hertford County - Hertford County Soil Survey, 1916</span></div>
<div class="row" style="top:720px"><div class="hd" ></div><svg class="ic" width="16" height="14" viewBox="0 0 16 14"><rect x="0.5" y="0.5" width="15" height="13" rx="1" fill="#fff" stroke="#5a5a5a"/><rect x="2" y="2" width="12" height="10" fill="#2f8fd8"/><path d="M2 12 L2 8 L5.5 5 L9 8.5 L11.5 6.5 L14 9 L14 12 Z" fill="#4d4d4d"/><circle cx="4" cy="4.2" r="0.9" fill="#cfeaff"/><path d="M8.3 3.2 a1.6 1.6 0 1 0 0.8 3" fill="none" stroke="#cfeaff" stroke-width="0.9"/><rect x="11.6" y="2.6" width="0.9" height="2.4" fill="#cfeaff"/></svg><span class="tx">North Carolina Maps - Hoke County - Hoke County Highway Map, 1938</span></div>
<div class="row" style="top:738px"><div class="hd" ></div><svg class="ic" width="16" height="14" viewBox="0 0 16 14"><rect x="0.5" y="0.5" width="15" height="13" rx="1" fill="#fff" stroke="#5a5a5a"/><rect x="2" y="2" width="12" height="10" fill="#2f8fd8"/><path d="M2 12 L2 8 L5.5 5 L9 8.5 L11.5 6.5 L14 9 L14 12 Z" fill="#4d4d4d"/><circle cx="4" cy="4.2" r="0.9" fill="#cfeaff"/><path d="M8.3 3.2 a1.6 1.6 0 1 0 0.8 3" fill="none" stroke="#cfeaff" stroke-width="0.9"/><rect x="11.6" y="2.6" width="0.9" height="2.4" fill="#cfeaff"/></svg><span class="tx">North Carolina Maps - Hoke County - Hoke County Soil Survey, 1918</span></div>
<div class="row" style="top:756px"><div class="hd" ></div><svg class="ic" width="16" height="14" viewBox="0 0 16 14"><rect x="0.5" y="0.5" width="15" height="13" rx="1" fill="#fff" stroke="#5a5a5a"/><rect x="2" y="2" width="12" height="10" fill="#2f8fd8"/><path d="M2 12 L2 8 L5.5 5 L9 8.5 L11.5 6.5 L14 9 L14 12 Z" fill="#4d4d4d"/><circle cx="4" cy="4.2" r="0.9" fill="#cfeaff"/><path d="M8.3 3.2 a1.6 1.6 0 1 0 0.8 3" fill="none" stroke="#cfeaff" stroke-width="0.9"/><rect x="11.6" y="2.6" width="0.9" height="2.4" fill="#cfeaff"/></svg><span class="tx">North Carolina Maps - Hyde County - Hyde County Highway Map, 1938</span></div>
<div class="row" style="top:774px"><div class="hd" ></div><svg class="ic" width="16" height="14" viewBox="0 0 16 14"><rect x="0.5" y="0.5" width="15" height="13" rx="1" fill="#fff" stroke="#5a5a5a"/><rect x="2" y="2" width="12" height="10" fill="#2f8fd8"/><path d="M2 12 L2 8 L5.5 5 L9 8.5 L11.5 6.5 L14 9 L14 12 Z" fill="#4d4d4d"/><circle cx="4" cy="4.2" r="0.9" fill="#cfeaff"/><path d="M8.3 3.2 a1.6 1.6 0 1 0 0.8 3" fill="none" stroke="#cfeaff" stroke-width="0.9"/><rect x="11.6" y="2.6" width="0.9" height="2.4" fill="#cfeaff"/></svg><span class="tx">North Carolina Maps - Iredell County - Iredell County Highway Map, 1938</span></div>
<div class="row" style="top:792px"><div class="hd" ></div><svg class="ic" width="16" height="14" viewBox="0 0 16 14"><rect x="0.5" y="0.5" width="15" height="13" rx="1" fill="#fff" stroke="#5a5a5a"/><rect x="2" y="2" width="12" height="10" fill="#2f8fd8"/><path d="M2 12 L2 8 L5.5 5 L9 8.5 L11.5 6.5 L14 9 L14 12 Z" fill="#4d4d4d"/><circle cx="4" cy="4.2" r="0.9" fill="#cfeaff"/><path d="M8.3 3.2 a1.6 1.6 0 1 0 0.8 3" fill="none" stroke="#cfeaff" stroke-width="0.9"/><rect x="11.6" y="2.6" width="0.9" height="2.4" fill="#cfeaff"/></svg><span class="tx">North Carolina Maps - Jackson County - Highway Map, 1938</span></div>
<div class="row" style="top:810px"><div class="hd" ></div><svg class="ic" width="16" height="14" viewBox="0 0 16 14"><rect x="0.5" y="0.5" width="15" height="13" rx="1" fill="#fff" stroke="#5a5a5a"/><rect x="2" y="2" width="12" height="10" fill="#2f8fd8"/><path d="M2 12 L2 8 L5.5 5 L9 8.5 L11.5 6.5 L14 9 L14 12 Z" fill="#4d4d4d"/><circle cx="4" cy="4.2" r="0.9" fill="#cfeaff"/><path d="M8.3 3.2 a1.6 1.6 0 1 0 0.8 3" fill="none" stroke="#cfeaff" stroke-width="0.9"/><rect x="11.6" y="2.6" width="0.9" height="2.4" fill="#cfeaff"/></svg><span class="tx">North Carolina Maps - Johnston County - Battle of Bentonville, N.C., circa 1891-1895</span></div>
<div class="row" style="top:828px"><div class="hd" ></div><svg class="ic" width="16" height="14" viewBox="0 0 16 14"><rect x="0.5" y="0.5" width="15" height="13" rx="1" fill="#fff" stroke="#5a5a5a"/><rect x="2" y="2" width="12" height="10" fill="#2f8fd8"/><path d="M2 12 L2 8 L5.5 5 L9 8.5 L11.5 6.5 L14 9 L14 12 Z" fill="#4d4d4d"/><circle cx="4" cy="4.2" r="0.9" fill="#cfeaff"/><path d="M8.3 3.2 a1.6 1.6 0 1 0 0.8 3" fill="none" stroke="#cfeaff" stroke-width="0.9"/><rect x="11.6" y="2.6" width="0.9" height="2.4" fill="#cfeaff"/></svg><span class="tx">North Carolina Maps - Johnston County - Johnston County Soil Survey, 1911</span></div>
<div class="row" style="top:846px"><div class="hd" ></div><svg class="ic" width="16" height="14" viewBox="0 0 16 14"><rect x="0.5" y="0.5" width="15" height="13" rx="1" fill="#fff" stroke="#5a5a5a"/><rect x="2" y="2" width="12" height="10" fill="#2f8fd8"/><path d="M2 12 L2 8 L5.5 5 L9 8.5 L11.5 6.5 L14 9 L14 12 Z" fill="#4d4d4d"/><circle cx="4" cy="4.2" r="0.9" fill="#cfeaff"/><path d="M8.3 3.2 a1.6 1.6 0 1 0 0.8 3" fill="none" stroke="#cfeaff" stroke-width="0.9"/><rect x="11.6" y="2.6" width="0.9" height="2.4" fill="#cfeaff"/></svg><span class="tx">North Carolina Maps - Jones County - Jones County Soil Survey, 1934</span></div>
<div class="row" style="top:864px"><div class="hd" ></div><svg class="ic" width="16" height="14" viewBox="0 0 16 14"><rect x="0.5" y="0.5" width="15" height="13" rx="1" fill="#fff" stroke="#5a5a5a"/><rect x="2" y="2" width="12" height="10" fill="#2f8fd8"/><path d="M2 12 L2 8 L5.5 5 L9 8.5 L11.5 6.5 L14 9 L14 12 Z" fill="#4d4d4d"/><circle cx="4" cy="4.2" r="0.9" fill="#cfeaff"/><path d="M8.3 3.2 a1.6 1.6 0 1 0 0.8 3" fill="none" stroke="#cfeaff" stroke-width="0.9"/><rect x="11.6" y="2.6" width="0.9" height="2.4" fill="#cfeaff"/></svg><span class="tx">North Carolina Maps - Lee County - Lee County Highway Map, 1938</span></div>
</div>
<!-- scrollbars -->
<div class="a" style="left:666px;top:528px;width:2px;height:100px;background:#808080"></div>
<div class="a" style="left:21px;top:1000px;width:556px;height:2px;background:#808080"></div>

<!-- right panel -->
<div class="a" style="left:685px;top:44px;width:1235px;height:969px;border-top:1px solid #a0a0a0;border-left:1px solid #a0a0a0;border-right:1px solid #a0a0a0;border-bottom:2px solid #888"></div>
<div class="a" style="left:686px;top:45px;width:1233px;height:30px;border-top:1px solid #fff;border-bottom:1px solid #fff;background:#f0f0f0"></div>
<!-- toolbar -->
<svg class="a" style="left:697px;top:51px" width="16" height="16" viewBox="0 0 16 16">
  <circle cx="6" cy="6" r="5" fill="#fff" stroke="#0a0a50" stroke-width="1.5"/>
  <path d="M6 3 V9 M3 6 H9" stroke="#0a0a50" stroke-width="2"/>
  <line x1="9.5" y1="9.5" x2="14.5" y2="14.5" stroke="#0a0a50" stroke-width="2"/>
</svg>
<div class="t" style="left:717px;top:52px;font-size:12.7px">Zoom in</div>
<div class="t" style="left:803px;top:52px;font-size:12.7px;color:#a0a0a0">Zoom out</div>
<div class="a" style="left:868px;top:48px;width:1px;height:22px;background:#a0a0a0"></div>
<div class="a" style="left:873px;top:48px;width:89px;height:22px;background:#f7f7f7;border-top:1px solid #a0a0a0;border-left:1px solid #a0a0a0"></div>
<svg class="a" style="left:887px;top:53px" width="13" height="14" viewBox="1 0.3 9.6 13.4" preserveAspectRatio="none">
  <path d="M4.2 13.3 L1.6 9.6 Q1 8.6 2 8.4 Q2.6 8.3 3.3 9.2 L3.6 9.6 V3.2 Q3.6 2.2 4.4 2.2 Q5.2 2.2 5.2 3.2 V7 V1.6 Q5.2 0.7 6 0.7 Q6.8 0.7 6.8 1.6 V7 V2 Q6.8 1.2 7.6 1.2 Q8.4 1.2 8.4 2 V7 V3.4 Q8.4 2.6 9.2 2.6 Q10 2.6 10 3.4 V9.6 Q10 12.2 8.8 13.3 Z" fill="#fff" stroke="#4a4a4a" stroke-width="0.6" stroke-linejoin="round"/>
</svg>
<div class="t" style="left:904px;top:53px;font-size:12.5px">Pan map</div>
<div class="a" style="left:971px;top:52px;width:14px;height:14px;border:1.5px dashed #333;border-radius:3px"></div>
<div class="t" style="left:990px;top:52px;font-size:12.35px">Rectangle</div>
<div class="a" style="left:1060px;top:48px;width:281px;height:22px;background:#fff"></div>
<svg class="a" style="left:1349px;top:51px" width="14" height="15" viewBox="0 0 14 15">
  <path d="M6.5 0 V10 M2.5 6 L6.5 10 L10.5 6" stroke="#444" stroke-width="1.1" fill="none"/>
  <path d="M0.5 10.5 V13.5 Q0.5 14.5 1.5 14.5 H11.5 Q12.5 14.5 12.5 13.5 V10.5" stroke="#444" stroke-width="1.1" fill="none"/>
</svg>
<div class="t" style="left:1368px;top:52px;font-size:12.4px">Download</div>

<!-- map view -->
<div class="a" style="left:686px;top:75px;width:1232px;height:936px;background:#000"></div>
<div class="a" style="left:918px;top:159px;width:768px;height:768px;background:#fff"></div>
<svg class="a" style="left:1100px;top:170px" width="500" height="505" viewBox="1100 170 500 505"><defs><filter id="bl" x="-10%" y="-10%" width="120%" height="120%"><feGaussianBlur stdDeviation="3"/></filter><filter id="bl2" x="-20%" y="-10%" width="140%" height="120%"><feGaussianBlur stdDeviation="3"/></filter><filter id="bs" x="-20%" y="-20%" width="140%" height="140%"><feGaussianBlur stdDeviation="0.8"/></filter></defs><polygon points="1132,180 1592,180 1591,662 1350,664 1110,669 1112,546 1126,546 1127,473 1131,473" fill="#f6f5ef" /><polygon points="1142,201 1552,201 1552,641 1124,651 1128,508 1141,470" fill="#f7f5eb" /><line x1="1230" y1="201" x2="1226" y2="651" stroke="#cdd3d2" stroke-width="0.6"/><line x1="1313" y1="201" x2="1310" y2="645" stroke="#cdd3d2" stroke-width="0.6"/><line x1="1396" y1="201" x2="1394" y2="643" stroke="#cdd3d2" stroke-width="0.6"/><line x1="1478" y1="201" x2="1477" y2="641" stroke="#cdd3d2" stroke-width="0.6"/><line x1="1142" y1="248" x2="1552" y2="247" stroke="#cdd3d2" stroke-width="0.6"/><line x1="1142" y1="321" x2="1552" y2="320" stroke="#cdd3d2" stroke-width="0.6"/><line x1="1135" y1="395" x2="1552" y2="394" stroke="#cdd3d2" stroke-width="0.6"/><line x1="1130" y1="471" x2="1552" y2="469" stroke="#cdd3d2" stroke-width="0.6"/><line x1="1128" y1="560" x2="1552" y2="558" stroke="#cdd3d2" stroke-width="0.6"/><line x1="1124" y1="630" x2="1552" y2="628" stroke="#cdd3d2" stroke-width="0.6"/><g filter="url(#bl)"><polygon points="1364,201 1471,201 1473.5,242.7 1482,291 1495,339.6 1510,388 1524,420 1545,480 1551,565 1551,638 1507,638 1483,626 1466,590 1462,560 1447,570 1398,567 1350,553 1332.6,545.5 1322.9,538.3 1320,526.6 1308,514 1292,501 1282,485 1268,468 1249,456 1234,441 1218,431 1212,420 1250,410 1360,300" fill="#dbe7ec" /></g><g filter="url(#bl2)"><polygon points="1476,201 1503,201 1512,250 1522,300 1535,370 1548,440 1556,490 1545,490 1520,410 1500,330 1485,260" fill="#d8e5eb" /></g><polygon points="1142,201 1367,201.5 1363.3,233 1356,245.1 1364.5,279 1379,300.8 1408.1,308.1 1410.6,320.2 1398.4,327.5 1413,354.1 1430,375.9 1446.9,400.1 1459,420 1471,444 1481,468 1495,500 1505,522 1515,551 1524,580 1530,594 1534,626 1532,633 1524,631 1500,611 1486,594 1481,575 1486,565 1476,546 1466,527 1452,500 1444.5,480.6 1430,461 1422.7,444 1418,420 1414,400 1405,402 1406,420 1413,449 1422.7,492.7 1430,517 1447,547 1422.7,546 1386,534 1362,521.7 1350,506 1330,483 1313,468 1294,451.5 1269.6,434.5 1245,427 1237,420 1230,402.6 1222,388 1217,375.9 1212,363.8 1200,359 1190,349.3 1176,339.6 1160,329.9 1150,320.2 1141.8,309.3" fill="#ebd5c2" /><path d="M1143.0,201.5 C1148.5,197.7 1167.8,197.5 1175.7,201.5 C1183.6,205.5 1183.4,218.0 1190.3,225.7 C1197.2,233.4 1202.8,241.7 1216.9,247.5 C1231.0,253.3 1264.3,256.4 1275.0,260.8 C1285.7,265.2 1279.1,268.3 1281.1,274.2 C1283.1,280.1 1286.6,289.1 1287.2,296.0 C1287.8,302.9 1285.9,308.4 1284.7,315.3 C1283.5,322.2 1284.7,332.9 1279.9,337.2 C1275.1,341.4 1264.2,340.4 1255.7,340.8 C1247.2,341.2 1236.3,342.0 1229.0,339.6 C1221.7,337.2 1216.9,331.9 1212.1,326.2 C1207.2,320.5 1201.7,315.2 1199.9,305.7 C1198.1,296.2 1203.6,280.0 1201.2,269.3 C1198.8,258.6 1192.1,248.2 1185.4,241.5 C1178.7,234.8 1168.3,232.2 1161.2,229.4 C1154.1,226.6 1146.0,229.2 1143.0,224.5 C1140.0,219.8 1137.5,205.3 1143.0,201.5Z" fill="#f3eecb" /><path d="M1142.3,226.2 C1145.5,213.7 1154.0,227.8 1161.2,230.6 C1168.4,233.3 1179.4,237.4 1185.4,242.7 C1191.5,247.9 1195.5,253.2 1197.5,262.1 C1199.5,271.0 1197.1,287.1 1197.5,296.0 C1197.9,304.9 1202.3,310.5 1199.9,315.3 C1197.5,320.1 1190.3,324.2 1183.0,325.0 C1175.7,325.8 1163.1,323.4 1156.3,320.2 C1149.5,317.0 1144.6,321.4 1142.3,305.7 C1140.0,290.0 1139.1,238.7 1142.3,226.2Z" fill="#eccabf" /><path d="M1144.2,242.7 C1145.8,240.3 1153.9,240.7 1156.3,242.7 C1158.7,244.7 1160.4,252.4 1158.8,254.8 C1157.2,257.2 1149.0,259.2 1146.6,257.2 C1144.2,255.2 1142.6,245.1 1144.2,242.7Z" fill="#78b594" /><path d="M1153.9,259.6 C1157.1,257.2 1171.7,257.6 1175.7,259.6 C1179.7,261.6 1181.3,269.3 1178.1,271.7 C1174.9,274.1 1160.3,276.2 1156.3,274.2 C1152.3,272.2 1150.7,262.0 1153.9,259.6Z" fill="#c9d2d8" /><path d="M1141.8,281.4 C1146.2,278.6 1162.8,281.1 1168.4,283.9 C1174.1,286.7 1177.3,294.8 1175.7,298.4 C1174.1,302.0 1164.4,305.3 1158.8,305.7 C1153.2,306.1 1145.1,304.9 1142.3,300.8 C1139.5,296.8 1137.4,284.2 1141.8,281.4Z" fill="#a9ad5e" /><path d="M1180.6,269.3 C1183.8,266.5 1194.3,263.3 1197.5,266.9 C1200.7,270.5 1201.9,286.2 1199.9,291.1 C1197.9,296.0 1189.0,297.2 1185.4,296.0 C1181.8,294.8 1178.9,288.3 1178.1,283.9 C1177.3,279.4 1177.4,272.1 1180.6,269.3Z" fill="#d2d27a" /><path d="M1168.4,252.4 C1172.9,250.0 1187.9,249.2 1192.7,252.4 C1197.5,255.6 1199.9,267.3 1197.5,271.7 C1195.1,276.1 1183.3,279.8 1178.1,279.0 C1172.8,278.2 1167.6,271.3 1166.0,266.9 C1164.4,262.5 1164.0,254.8 1168.4,252.4Z" fill="#e6a9a2" /><path d="M1144.2,230.6 C1148.6,228.6 1171.6,232.6 1178.1,235.4 C1184.6,238.2 1187.4,245.5 1183.0,247.5 C1178.6,249.5 1158.0,250.3 1151.5,247.5 C1145.0,244.7 1139.8,232.6 1144.2,230.6Z" fill="#f1dcd6" /><path d="M1185.4,308.1 C1187.0,305.7 1196.7,310.1 1199.9,312.9 C1203.1,315.7 1206.4,322.6 1204.8,325.0 C1203.2,327.4 1193.5,330.3 1190.3,327.5 C1187.1,324.7 1183.8,310.5 1185.4,308.1Z" fill="#c8ced8" /><path d="M1166.0,312.9 C1168.4,311.7 1178.6,313.3 1180.6,315.3 C1182.6,317.3 1180.5,323.8 1178.1,325.0 C1175.7,326.2 1168.0,324.6 1166.0,322.6 C1164.0,320.6 1163.6,314.1 1166.0,312.9Z" fill="#e7d266" /><path d="M1142.3,222.1 C1146.0,221.0 1157.2,222.9 1164.8,225.2 C1172.4,227.5 1183.1,231.4 1187.8,235.9 C1192.5,240.4 1192.3,246.4 1193.2,252.4 C1194.1,258.4 1193.6,264.4 1193.2,271.7 C1192.8,279.0 1190.6,288.7 1190.7,296.0 C1190.8,303.3 1191.3,309.1 1194.1,315.3 C1196.8,321.6 1201.8,328.4 1207.2,333.5 C1212.6,338.6 1219.3,343.2 1226.6,345.6 C1233.9,348.0 1243.9,348.6 1250.8,348.1 C1257.7,347.6 1264.2,345.9 1267.8,342.5 C1271.4,339.1 1273.4,332.2 1272.6,327.5 C1271.8,322.8 1267.5,316.9 1262.9,314.1 C1258.3,311.3 1248.4,309.9 1244.8,310.5 C1241.2,311.1 1239.5,315.9 1241.1,317.8 C1242.7,319.7 1251.2,320.0 1254.4,322.1 C1257.6,324.2 1260.5,328.2 1260.5,330.4 C1260.5,332.6 1259.2,334.4 1254.4,335.2 C1249.6,336.0 1237.5,336.8 1231.4,335.2 C1225.4,333.6 1221.6,329.4 1218.1,325.5 C1214.5,321.6 1211.8,316.6 1210.1,311.7 C1208.4,306.8 1208.0,302.2 1207.7,296.0 C1207.4,289.8 1208.8,281.3 1208.2,274.2 C1207.6,267.1 1207.0,259.2 1204.1,253.6 C1201.2,247.9 1197.2,243.7 1190.7,240.3 C1184.2,237.0 1172.9,235.0 1164.8,233.5 C1156.7,232.0 1146.0,233.4 1142.3,231.5 C1138.5,229.6 1138.5,223.2 1142.3,222.1Z" fill="#85b08b" /><path d="M1142,222 C1144.7,220.3 1153.2,223.3 1158,225 C1162.8,226.7 1169.5,229.3 1171,232 C1172.5,234.7 1170.5,240.2 1167,241 C1163.5,241.8 1154.2,238.0 1150,237 C1145.8,236.0 1143.3,237.5 1142,235 C1140.7,232.5 1139.3,223.7 1142,222Z" fill="#e6c850" /><path d="M1179.4,202.7 C1181.2,206.1 1185.3,217.0 1190.3,223.3 C1195.3,229.6 1202.3,235.7 1209.6,240.3 C1216.9,245.0 1226.2,248.6 1233.9,251.2 C1241.6,253.8 1248.4,254.5 1255.7,256.0 C1263.0,257.5 1273.9,259.4 1277.5,260.1" fill="none" stroke="#88b591" stroke-width="10" stroke-linejoin="round" stroke-linecap="round" /><path d="M1180.6,202.7 C1182.2,205.3 1188.7,215.8 1190.3,218.4" fill="none" stroke="#88b591" stroke-width="13" stroke-linejoin="round" stroke-linecap="round" /><path d="M1216.9,243.9 C1220.1,244.5 1229.8,246.5 1236.3,247.5 C1242.8,248.5 1249.7,248.9 1255.7,249.9 C1261.8,250.9 1269.8,253.0 1272.6,253.6" fill="none" stroke="#c8cb70" stroke-width="5" stroke-linejoin="round" stroke-linecap="round" /><path d="M1199.9,202.7 C1206.4,200.5 1227.8,198.9 1233.9,202.7 C1240.0,206.5 1238.3,220.2 1236.3,225.7 C1234.3,231.1 1227.0,234.6 1221.7,235.4 C1216.5,236.2 1209.2,233.8 1204.8,230.6 C1200.4,227.4 1195.9,220.7 1195.1,216.0 C1194.3,211.3 1193.4,204.9 1199.9,202.7Z" fill="#cfe1e5" /><path d="M1195.1,203.9 C1197.9,200.9 1213.7,201.5 1216.9,203.9 C1220.1,206.3 1217.3,215.4 1214.5,218.4 C1211.7,221.4 1203.1,224.5 1199.9,222.1 C1196.7,219.7 1192.3,206.9 1195.1,203.9Z" fill="#e6ab9e" /><path d="M1221.7,203.9 C1225.8,199.1 1249.2,199.5 1255.7,203.9 C1262.2,208.3 1262.1,224.1 1260.5,230.6 C1258.9,237.1 1250.8,242.3 1246.0,242.7 C1241.2,243.1 1235.5,239.5 1231.4,233.0 C1227.4,226.5 1217.7,208.8 1221.7,203.9Z" fill="#e9c8b2" /><path d="M1262.9,216.0 C1266.6,213.2 1281.8,211.0 1287.2,213.6 C1292.7,216.2 1297.2,227.6 1295.6,231.8 C1294.0,236.0 1282.5,239.2 1277.5,239.0 C1272.5,238.8 1267.7,234.4 1265.3,230.6 C1262.9,226.8 1259.2,218.8 1262.9,216.0Z" fill="#78b594" /><path d="M1246.0,206.3 C1247.8,203.1 1253.7,201.1 1255.7,206.3 C1257.7,211.6 1258.9,231.7 1258.1,237.8 C1257.3,243.9 1253.0,244.7 1250.8,242.7 C1248.6,240.7 1245.6,231.8 1244.8,225.7 C1244.0,219.6 1244.2,209.5 1246.0,206.3Z" fill="#c9a055" opacity="0.8"/><path d="M1250.8,225.7 C1252.4,223.3 1262.1,221.7 1265.3,223.3 C1268.5,224.9 1271.8,233.0 1270.2,235.4 C1268.6,237.8 1258.9,239.4 1255.7,237.8 C1252.5,236.2 1249.2,228.1 1250.8,225.7Z" fill="#e7d266" /><path d="M1289.6,203.9 C1296.0,201.5 1322.2,200.3 1328.3,203.9 C1334.3,207.5 1329.9,221.7 1325.9,225.7 C1321.9,229.7 1310.1,229.3 1304.1,228.1 C1298.0,226.9 1292.0,222.4 1289.6,218.4 C1287.2,214.4 1283.1,206.3 1289.6,203.9Z" fill="#efd9b8" /><path d="M1296.8,206.3 C1299.2,204.3 1311.4,204.3 1313.8,206.3 C1316.2,208.3 1313.8,216.4 1311.4,218.4 C1309.0,220.4 1301.7,220.4 1299.3,218.4 C1296.9,216.4 1294.4,208.3 1296.8,206.3Z" fill="#c8dcc4" /><path d="M1330.8,206.3 C1336.0,203.3 1358.2,201.9 1364.7,203.9 C1371.2,205.9 1372.0,214.2 1370.0,218.4 C1368.0,222.7 1358.7,228.8 1352.6,229.4 C1346.5,230.0 1336.8,225.9 1333.2,222.1 C1329.6,218.2 1325.5,209.3 1330.8,206.3Z" fill="#efcfa2" /><path d="M1323.5,229.4 C1329.5,227.0 1354.5,225.3 1362.2,226.9 C1370.0,228.5 1368.7,234.9 1370.0,239.0 C1371.3,243.1 1375.3,249.6 1370.0,251.2 C1364.7,252.8 1345.3,250.3 1338.0,248.7 C1330.7,247.1 1328.3,244.7 1325.9,241.5 C1323.5,238.3 1317.5,231.8 1323.5,229.4Z" fill="#cfe1e5" /><path d="M1275.0,252.4 C1277.8,249.6 1288.1,246.7 1294.4,249.9 C1300.7,253.1 1310.2,265.4 1312.6,271.7 C1315.0,278.0 1312.8,285.7 1309.0,287.5 C1305.2,289.3 1294.8,286.0 1289.6,282.6 C1284.3,279.2 1279.9,271.9 1277.5,266.9 C1275.1,261.9 1272.2,255.2 1275.0,252.4Z" fill="#78b594" /><path d="M1270.2,228.1 C1273.4,225.3 1295.6,227.0 1304.1,230.6 C1312.6,234.2 1320.3,245.5 1321.1,249.9 C1321.9,254.3 1315.1,257.6 1309.0,257.2 C1302.9,256.8 1291.2,252.3 1284.7,247.5 C1278.2,242.7 1267.0,230.9 1270.2,228.1Z" fill="#f0d2c6" /><path d="M1321.1,248.7 C1325.9,245.5 1346.3,245.5 1352.6,248.7 C1358.8,251.9 1361.0,262.9 1358.6,268.1 C1356.2,273.4 1343.8,280.2 1338.0,280.2 C1332.2,280.2 1326.3,273.4 1323.5,268.1 C1320.7,262.9 1316.2,251.9 1321.1,248.7Z" fill="#e6ab9e" /><path d="M1333.2,254.8 C1334.8,252.4 1343.1,252.8 1345.3,254.8 C1347.5,256.8 1348.1,264.5 1346.5,266.9 C1344.9,269.3 1337.8,271.3 1335.6,269.3 C1333.4,267.3 1331.6,257.2 1333.2,254.8Z" fill="#e7d266" /><path d="M1289.6,271.7 C1292.8,270.5 1307.3,279.0 1313.8,283.9 C1320.2,288.8 1328.3,297.2 1328.3,300.8 C1328.3,304.4 1319.4,307.3 1313.8,305.7 C1308.2,304.1 1298.4,296.8 1294.4,291.1 C1290.4,285.4 1286.4,272.9 1289.6,271.7Z" fill="#f0d5cb" /><path d="M1313.8,283.9 C1315.4,280.3 1329.2,281.5 1333.2,283.9 C1337.2,286.3 1339.6,294.8 1338.0,298.4 C1336.4,302.0 1327.5,308.1 1323.5,305.7 C1319.5,303.3 1312.2,287.5 1313.8,283.9Z" fill="#78b594" /><path d="M1333.2,286.3 C1336.8,281.9 1346.5,279.1 1350.1,283.9 C1353.7,288.7 1357.0,308.4 1355.0,315.3 C1353.0,322.2 1342.5,325.8 1338.0,325.0 C1333.5,324.2 1329.1,316.9 1328.3,310.5 C1327.5,304.1 1329.6,290.7 1333.2,286.3Z" fill="#d6d8dc" /><path d="M1347.7,249.9 C1351.0,243.8 1366.3,237.4 1370.0,249.9 C1373.7,262.4 1371.7,314.1 1370.0,325.0 C1368.3,335.9 1363.1,321.8 1359.8,315.3 C1356.5,308.9 1352.1,297.2 1350.1,286.3 C1348.1,275.4 1344.4,256.0 1347.7,249.9Z" fill="#e6a393" /><path d="M1359.8,279.0 C1361.1,274.1 1368.3,271.4 1370.0,276.6 C1371.7,281.9 1371.3,305.6 1370.0,310.5 C1368.7,315.4 1363.9,310.9 1362.2,305.7 C1360.5,300.4 1358.5,283.9 1359.8,279.0Z" fill="#e7d266" /><path d="M1277.5,305.7 C1281.5,300.4 1298.0,300.0 1304.1,305.7 C1310.1,311.4 1315.4,331.5 1313.8,339.6 C1312.2,347.7 1300.1,354.5 1294.4,354.1 C1288.8,353.7 1282.7,345.3 1279.9,337.2 C1277.1,329.1 1273.5,310.9 1277.5,305.7Z" fill="#cfe1e5" /><path d="M1289.6,305.7 C1292.0,303.3 1299.3,308.9 1304.1,315.3 C1308.9,321.8 1318.6,337.9 1318.6,344.4 C1318.6,350.9 1308.9,356.5 1304.1,354.1 C1299.3,351.7 1292.0,338.0 1289.6,329.9 C1287.2,321.8 1287.2,308.1 1289.6,305.7Z" fill="#78b594" opacity="0.7"/><path d="M1313.8,320.2 C1317.0,312.1 1332.0,309.6 1338.0,315.3 C1344.0,321.0 1350.1,343.6 1350.1,354.1 C1350.1,364.6 1343.2,376.7 1338.0,378.3 C1332.8,379.9 1322.6,373.5 1318.6,363.8 C1314.6,354.1 1310.6,328.3 1313.8,320.2Z" fill="#e5aa9c" /><path d="M1325.9,329.9 C1327.1,323.0 1335.6,323.4 1338.0,329.9 C1340.4,336.3 1341.6,361.7 1340.4,368.6 C1339.2,375.5 1333.2,377.6 1330.8,371.1 C1328.4,364.7 1324.7,336.8 1325.9,329.9Z" fill="#9aa066" /><path d="M1342.9,305.7 C1347.0,300.9 1365.5,296.8 1370.0,305.7 C1374.5,314.6 1372.9,350.9 1370.0,359.0 C1367.1,367.1 1356.7,358.2 1352.6,354.1 C1348.5,350.1 1346.9,342.8 1345.3,334.7 C1343.7,326.6 1338.8,310.5 1342.9,305.7Z" fill="#f3eecb" /><path d="M1142.3,309.3 C1145.5,312.3 1152.8,320.8 1161.2,327.5 C1169.6,334.2 1183.4,343.2 1192.7,349.3 C1202.0,355.4 1211.7,358.2 1216.9,363.8 C1222.2,369.4 1221.0,376.7 1224.2,383.2 C1227.4,389.7 1232.7,396.5 1236.3,402.6 C1239.9,408.7 1244.4,417.1 1246.0,420.0" fill="none" stroke="#d0c072" stroke-width="9" stroke-linejoin="round" stroke-linecap="round" /><path d="M1153.9,309.3 C1158.8,312.5 1172.9,322.4 1183.0,328.7 C1193.1,334.9 1205.6,341.4 1214.5,346.8 C1223.4,352.2 1229.4,356.1 1236.3,361.4 C1243.2,366.6 1250.5,371.4 1255.7,378.3 C1261.0,385.2 1265.8,398.6 1267.8,402.6" fill="none" stroke="#ecc6b7" stroke-width="11" stroke-linejoin="round" stroke-linecap="round" /><path d="M1224.2,373.5 C1227.4,370.3 1240.3,372.3 1246.0,375.9 C1251.7,379.5 1258.9,390.4 1258.1,395.3 C1257.3,400.2 1246.3,405.0 1241.1,405.0 C1235.8,405.0 1229.4,400.6 1226.6,395.3 C1223.8,390.1 1221.0,376.7 1224.2,373.5Z" fill="#c4b55e" /><path d="M1233.9,356.5 C1239.2,354.1 1262.9,354.9 1270.2,359.0 C1277.5,363.1 1279.9,376.0 1277.5,380.8 C1275.1,385.6 1262.2,389.2 1255.7,388.0 C1249.2,386.8 1242.3,378.8 1238.7,373.5 C1235.1,368.2 1228.7,358.9 1233.9,356.5Z" fill="#e7ab9f" /><path d="M1265.3,354.1 C1267.7,348.9 1284.8,349.2 1289.6,354.1 C1294.4,359.0 1296.8,377.9 1294.4,383.2 C1292.0,388.4 1279.8,390.5 1275.0,385.6 C1270.2,380.8 1262.9,359.4 1265.3,354.1Z" fill="#78b594" /><path d="M1284.7,378.3 C1291.2,375.1 1318.6,375.2 1325.9,380.8 C1333.2,386.4 1332.7,406.6 1328.3,412.2 C1323.9,417.8 1306.1,416.7 1299.3,414.7 C1292.5,412.7 1289.6,406.2 1287.2,400.1 C1284.8,394.0 1278.2,381.5 1284.7,378.3Z" fill="#78b594" /><path d="M1255.7,383.2 C1260.5,380.8 1279.1,381.9 1284.7,388.0 C1290.3,394.1 1292.8,414.7 1289.6,420.0 C1286.4,425.3 1270.9,422.9 1265.3,420.0 C1259.7,417.1 1257.3,408.7 1255.7,402.6 C1254.1,396.5 1250.9,385.6 1255.7,383.2Z" fill="#efd2c8" /><path d="M1328.3,383.2 C1331.9,377.1 1346.9,377.1 1352.6,383.2 C1358.2,389.3 1365.8,413.9 1362.2,420.0 C1358.6,426.1 1336.5,426.1 1330.8,420.0 C1325.1,413.9 1324.7,389.3 1328.3,383.2Z" fill="#e8b6a6" /><path d="M1338.0,388.0 C1339.2,382.7 1349.4,382.7 1352.6,388.0 C1355.8,393.3 1358.6,414.7 1357.4,420.0 C1356.2,425.3 1348.5,425.3 1345.3,420.0 C1342.1,414.7 1336.8,393.3 1338.0,388.0Z" fill="#8fae68" /><path d="M1260.5,402.6 C1263.3,400.5 1275.1,404.5 1277.5,407.4 C1279.9,410.3 1277.8,417.9 1275.0,420.0 C1272.2,422.1 1262.9,422.9 1260.5,420.0 C1258.1,417.1 1257.7,404.7 1260.5,402.6Z" fill="#d9b84e" /><path d="M1343.9,300.0 C1347.3,293.9 1356.8,293.9 1362.0,300.0 C1367.2,306.1 1369.8,325.0 1375.3,336.3 C1380.8,347.6 1390.7,358.5 1394.7,367.8 C1398.8,377.1 1398.0,386.0 1399.6,392.1 C1401.2,398.2 1406.0,401.4 1404.4,404.2 C1402.8,407.0 1394.8,409.0 1389.9,409.0 C1385.1,409.0 1380.2,407.0 1375.3,404.2 C1370.4,401.4 1364.8,397.4 1360.8,392.1 C1356.8,386.9 1354.3,382.0 1351.1,372.7 C1347.9,363.4 1342.6,348.4 1341.4,336.3 C1340.2,324.2 1340.5,306.1 1343.9,300.0Z" fill="#f3eecb" /><path d="M1345,330 C1350.8,322.5 1366.7,326.7 1375,335 C1383.3,343.3 1389.5,364.2 1395,380 C1400.5,395.8 1405.2,414.2 1408,430 C1410.8,445.8 1413.7,463.3 1412,475 C1410.3,486.7 1403.7,496.2 1398,500 C1392.3,503.8 1384.0,503.8 1378,498 C1372.0,492.2 1366.7,476.3 1362,465 C1357.3,453.7 1353.7,444.2 1350,430 C1346.3,415.8 1340.8,396.7 1340,380 C1339.2,363.3 1339.2,337.5 1345,330Z" fill="#f3eecb" /><path d="M1389.9,416.3 C1395.6,411.5 1408.8,426.8 1414.1,435.7 C1419.3,444.6 1421.4,459.9 1421.4,469.6 C1421.4,479.3 1419.8,491.4 1414.1,493.8 C1408.4,496.2 1393.2,489.0 1387.5,484.1 C1381.8,479.2 1379.8,476.0 1380.2,464.7 C1380.6,453.4 1384.2,421.1 1389.9,416.3Z" fill="#f3eecb" /><path d="M1394.7,360.6 C1398.7,355.4 1414.9,369.4 1423.8,377.5 C1432.7,385.6 1441.5,397.7 1448.0,409.0 C1454.5,420.3 1462.6,435.2 1462.6,445.3 C1462.6,455.4 1454.5,467.6 1448.0,469.6 C1441.5,471.6 1429.5,463.1 1423.8,457.5 C1418.1,451.9 1418.1,443.8 1414.1,435.7 C1410.1,427.6 1402.8,421.5 1399.6,409.0 C1396.4,396.5 1390.7,365.9 1394.7,360.6Z" fill="#c5dbc6" /><path d="M1370.5,457.5 C1376.2,454.3 1390.7,463.6 1399.6,469.6 C1408.5,475.7 1415.7,483.7 1423.8,493.8 C1431.9,503.9 1445.6,520.7 1448.0,530.1 C1450.4,539.5 1448.4,546.7 1438.3,550.0 C1428.2,553.3 1398.0,555.3 1387.5,550.0 C1377.0,544.7 1378.9,528.2 1375.3,518.0 C1371.7,507.8 1366.5,499.1 1365.7,489.0 C1364.9,478.9 1364.8,460.7 1370.5,457.5Z" fill="#c5dbc6" /><path d="M1385.0,474.4 C1387.0,471.2 1397.6,475.3 1399.6,479.3 C1401.6,483.3 1399.2,495.4 1397.2,498.6 C1395.2,501.8 1389.5,502.6 1387.5,498.6 C1385.5,494.6 1383.0,477.6 1385.0,474.4Z" fill="#b9c6cc" /><path d="M1399.6,450.2 C1402.8,445.3 1420.2,447.7 1423.8,455.0 C1427.4,462.3 1424.6,488.9 1421.4,493.8 C1418.2,498.7 1408.0,491.4 1404.4,484.1 C1400.8,476.8 1396.4,455.1 1399.6,450.2Z" fill="#f1ead0" /><path d="M1365.7,300.0 C1368.1,304.0 1374.6,316.1 1380.2,324.2 C1385.8,332.3 1393.5,340.3 1399.6,348.4 C1405.6,356.5 1410.5,363.4 1416.5,372.7 C1422.5,382.0 1429.8,393.7 1435.9,404.2 C1442.0,414.7 1447.7,426.8 1452.9,435.7 C1458.2,444.6 1462.9,451.1 1467.4,457.5 C1471.9,463.9 1477.9,471.6 1480.0,474.4" fill="none" stroke="#b7c4cb" stroke-width="21" stroke-linejoin="round" stroke-linecap="round" opacity="0.7"/><path d="M1365.7,300.0 C1368.1,304.0 1374.6,316.1 1380.2,324.2 C1385.8,332.3 1393.5,340.3 1399.6,348.4 C1405.6,356.5 1410.5,363.4 1416.5,372.7 C1422.5,382.0 1429.8,393.7 1435.9,404.2 C1442.0,414.7 1447.7,426.8 1452.9,435.7 C1458.2,444.6 1462.9,451.1 1467.4,457.5 C1471.9,463.9 1477.9,471.6 1480.0,474.4" fill="none" stroke="#e2a090" stroke-width="15" stroke-linejoin="round" stroke-linecap="round" /><path d="M1375.3,326.6 C1377.3,323.0 1388.6,323.4 1392.3,326.6 C1396.0,329.8 1399.2,342.4 1397.2,346.0 C1395.2,349.6 1383.9,351.6 1380.2,348.4 C1376.5,345.2 1373.3,330.2 1375.3,326.6Z" fill="#e8cc58" /><path d="M1419.0,379.9 C1420.6,377.5 1427.5,376.7 1431.1,382.4 C1434.7,388.1 1440.4,407.8 1440.8,413.9 C1441.2,419.9 1436.7,421.5 1433.5,418.7 C1430.3,415.9 1423.8,403.4 1421.4,396.9 C1419.0,390.4 1417.4,382.3 1419.0,379.9Z" fill="#e8cc50" /><path d="M1428.6,314.5 C1430.2,318.1 1435.9,328.6 1438.3,336.3 C1440.7,344.0 1441.6,352.5 1443.2,360.6 C1444.8,368.7 1445.6,376.7 1448.0,384.8 C1450.4,392.9 1454.5,398.9 1457.7,409.0 C1460.9,419.1 1463.7,435.2 1467.4,445.3 C1471.1,455.4 1477.9,465.6 1480.0,469.6" fill="none" stroke="#e6a889" stroke-width="6" stroke-linejoin="round" stroke-linecap="round" /><path d="M1435.9,372.7 C1436.7,368.2 1444.8,371.4 1448.0,377.5 C1451.2,383.6 1456.1,404.6 1455.3,409.0 C1454.5,413.4 1446.4,410.2 1443.2,404.2 C1440.0,398.1 1435.1,377.1 1435.9,372.7Z" fill="#eedcb2" /><path d="M1273.6,382.4 C1280.9,379.2 1313.6,380.4 1322.1,384.8 C1330.6,389.2 1328.5,404.1 1324.5,409.0 C1320.5,413.9 1305.5,414.7 1297.8,413.9 C1290.1,413.1 1282.4,409.4 1278.4,404.2 C1274.4,398.9 1266.3,385.6 1273.6,382.4Z" fill="#78b594" /><path d="M1266.3,409.0 C1269.5,404.6 1286.5,404.6 1290.6,409.0 C1294.6,413.4 1293.8,431.2 1290.6,435.7 C1287.4,440.1 1275.2,440.1 1271.2,435.7 C1267.2,431.2 1263.1,413.4 1266.3,409.0Z" fill="#78b594" /><path d="M1302.7,435.7 C1305.1,430.4 1318.5,430.9 1322.1,435.7 C1325.7,440.5 1326.9,459.4 1324.5,464.7 C1322.1,469.9 1311.1,472.0 1307.5,467.2 C1303.9,462.4 1300.3,440.9 1302.7,435.7Z" fill="#78b594" /><path d="M1322.1,459.9 C1324.5,457.1 1335.8,457.1 1339.0,459.9 C1342.2,462.7 1343.8,474.0 1341.4,476.8 C1339.0,479.6 1327.7,479.6 1324.5,476.8 C1321.3,474.0 1319.7,462.7 1322.1,459.9Z" fill="#78b594" /><path d="M1346.3,491.4 C1348.7,486.1 1365.7,487.8 1370.5,493.8 C1375.3,499.9 1377.7,522.5 1375.3,527.7 C1372.9,533.0 1360.8,531.3 1356.0,525.3 C1351.2,519.2 1343.9,496.6 1346.3,491.4Z" fill="#78b594" /><path d="M1234.8,360.6 C1240.5,357.4 1271.1,361.4 1278.4,365.4 C1285.7,369.4 1284.1,381.6 1278.4,384.8 C1272.8,388.0 1251.8,388.8 1244.5,384.8 C1237.2,380.8 1229.1,363.8 1234.8,360.6Z" fill="#e8b2a6" /><path d="M1230.0,372.7 C1232.8,367.4 1243.8,367.9 1247.0,372.7 C1250.2,377.5 1252.2,396.4 1249.4,401.7 C1246.6,406.9 1233.2,409.0 1230.0,404.2 C1226.8,399.4 1227.2,377.9 1230.0,372.7Z" fill="#c8b85e" /><path d="M1234.8,416.3 C1237.6,413.5 1252.5,411.5 1256.6,413.9 C1260.6,416.3 1261.9,428.0 1259.1,430.8 C1256.3,433.6 1243.8,433.2 1239.7,430.8 C1235.7,428.4 1232.0,419.1 1234.8,416.3Z" fill="#c9b65c" /><path d="M1290.6,418.7 C1296.6,412.6 1330.1,414.6 1339.0,421.1 C1347.9,427.6 1350.0,451.4 1343.9,457.5 C1337.9,463.6 1311.6,464.0 1302.7,457.5 C1293.8,451.0 1284.5,424.8 1290.6,418.7Z" fill="#f0d5cb" /><path d="M1360.8,421.1 C1364.4,421.5 1379.4,428.4 1382.6,430.8 C1385.8,433.2 1383.8,436.1 1380.2,435.7 C1376.6,435.3 1364.0,430.8 1360.8,428.4 C1357.6,426.0 1357.2,420.7 1360.8,421.1Z" fill="#d9b84e" /><path d="M1322,378 C1324.3,384.2 1331.7,403.0 1336,415 C1340.3,427.0 1344.3,438.3 1348,450 C1351.7,461.7 1354.7,472.5 1358,485 C1361.3,497.5 1366.3,518.3 1368,525" fill="none" stroke="#e8b2a4" stroke-width="20" stroke-linejoin="round" stroke-linecap="round" /><path d="M1324,380 C1326.3,386.3 1333.7,405.5 1338,418 C1342.3,430.5 1346.3,443.0 1350,455 C1353.7,467.0 1356.8,478.3 1360,490 C1363.2,501.7 1367.5,519.2 1369,525" fill="none" stroke="#9aa665" stroke-width="7" stroke-linejoin="round" stroke-linecap="round" opacity="0.9"/><path d="M1254.2,333.9 C1257.4,330.3 1270.3,328.7 1278.4,329.1 C1286.5,329.5 1300.3,330.7 1302.7,336.3 C1305.1,341.9 1297.8,358.9 1293.0,363.0 C1288.2,367.1 1279.2,362.6 1273.6,360.6 C1267.9,358.6 1262.3,355.3 1259.1,350.9 C1255.9,346.4 1251.0,337.5 1254.2,333.9Z" fill="#f0d5cb" /><path d="M1278.4,314.5 C1282.8,310.9 1301.4,307.3 1307.5,309.7 C1313.6,312.1 1315.6,324.7 1314.8,329.1 C1314.0,333.5 1308.3,335.9 1302.7,336.3 C1297.1,336.7 1285.0,335.1 1280.9,331.5 C1276.9,327.9 1274.0,318.1 1278.4,314.5Z" fill="#78b594" opacity="0.8"/><path d="M1314.8,319.4 C1316.8,316.2 1327.3,321.0 1331.7,329.1 C1336.1,337.2 1341.4,359.7 1341.4,367.8 C1341.4,375.9 1335.3,380.7 1331.7,377.5 C1328.1,374.3 1322.4,358.1 1319.6,348.4 C1316.8,338.7 1312.8,322.6 1314.8,319.4Z" fill="#e4ada0" /><path d="M1331.7,333.9 C1332.9,329.0 1341.5,331.4 1343.9,336.3 C1346.3,341.2 1347.5,358.1 1346.3,363.0 C1345.1,367.9 1339.0,370.2 1336.6,365.4 C1334.2,360.5 1330.5,338.8 1331.7,333.9Z" fill="#d6dadf" /><path d="M1397.2,392.1 C1398.4,394.9 1404.0,403.4 1404.4,409.0 C1404.8,414.6 1398.8,420.8 1399.6,426.0 C1400.4,431.2 1408.5,435.7 1409.3,440.5 C1410.1,445.3 1403.6,450.1 1404.4,455.0 C1405.2,459.9 1410.9,464.8 1414.1,469.6 C1417.3,474.5 1422.2,481.7 1423.8,484.1" fill="none" stroke="#cfe0e6" stroke-width="5" stroke-linejoin="round" stroke-linecap="round" /><path d="M1375.3,435.7 C1377.3,437.3 1383.5,442.1 1387.5,445.3 C1391.5,448.5 1397.6,453.4 1399.6,455.0" fill="none" stroke="#cfe0e6" stroke-width="3" stroke-linejoin="round" stroke-linecap="round" /><path d="M1392.4,201.5 C1397.9,198.7 1424.3,197.1 1431.2,201.5 C1438.1,205.9 1434.0,219.2 1433.6,228.1 C1433.2,237.0 1432.5,249.8 1428.7,254.8 C1424.9,259.9 1416.0,258.6 1410.6,258.4 C1405.1,258.2 1398.8,256.2 1396.0,253.6 C1393.2,251.0 1392.0,246.5 1393.6,242.7 C1395.2,238.9 1404.9,234.6 1405.7,230.6 C1406.5,226.6 1400.6,223.2 1398.4,218.4 C1396.2,213.6 1386.9,204.3 1392.4,201.5Z" fill="#efd8ac" /><path d="M1393.6,240.3 C1395.6,237.1 1405.3,233.0 1408.1,235.4 C1410.9,237.8 1412.6,251.6 1410.6,254.8 C1408.6,258.0 1398.8,257.2 1396.0,254.8 C1393.2,252.4 1391.6,243.5 1393.6,240.3Z" fill="#b9c8cf" /><polygon points="1433.6,201.5 1446.9,201.5 1449.8,218.4 1445.7,235.4 1434.8,233.5" fill="#80a852" /><polygon points="1433.6,230.6 1449.3,228.1 1453.0,249.9 1448.1,263.3 1434.8,260.1" fill="#b88566" /><path d="M1350.0,201.5 C1352.8,195.0 1364.5,196.2 1367.0,201.5 C1369.5,206.8 1367.8,226.5 1365.0,233.0 C1362.2,239.5 1352.5,245.6 1350.0,240.3 C1347.5,235.1 1347.2,208.0 1350.0,201.5Z" fill="#efcfaa" /><path d="M1374.2,202.7 C1376.2,200.5 1386.0,200.1 1388.8,202.7 C1391.6,205.3 1392.0,215.0 1391.2,218.4 C1390.4,221.8 1386.3,223.7 1383.9,223.3 C1381.5,222.9 1378.2,219.4 1376.6,216.0 C1375.0,212.6 1372.2,204.9 1374.2,202.7Z" fill="#80a852" opacity="0.8"/><path d="M1352.4,249.9 C1353.6,254.4 1356.5,268.9 1359.7,276.6 C1362.9,284.3 1367.4,290.9 1371.8,296.0 C1376.2,301.1 1381.9,302.1 1386.3,306.9 C1390.7,311.7 1396.4,322.0 1398.4,325.0" fill="none" stroke="#e2a090" stroke-width="10" stroke-linejoin="round" stroke-linecap="round" /><path d="M1364.5,296.0 C1366.1,292.8 1374.4,292.8 1376.6,296.0 C1378.8,299.2 1379.5,312.1 1377.9,315.3 C1376.3,318.5 1369.2,318.5 1367.0,315.3 C1364.8,312.1 1362.9,299.2 1364.5,296.0Z" fill="#e7d266" /><path d="M1386.3,300.8 C1389.9,299.2 1406.1,302.5 1410.6,305.7 C1415.0,308.9 1415.0,317.0 1413.0,320.2 C1411.0,323.4 1402.4,325.8 1398.4,325.0 C1394.4,324.2 1390.8,319.3 1388.8,315.3 C1386.8,311.3 1382.7,302.4 1386.3,300.8Z" fill="#efd6b0" /><path d="M1400.9,308.1 C1401.7,306.9 1406.5,308.9 1408.1,310.5 C1409.7,312.1 1411.4,316.6 1410.6,317.8 C1409.8,319.0 1404.9,319.4 1403.3,317.8 C1401.7,316.2 1400.1,309.3 1400.9,308.1Z" fill="#8aa050" /><path d="M1422.7,310.5 C1425.3,307.7 1432.6,308.7 1436.0,310.5 C1439.4,312.3 1441.7,314.1 1443.3,321.4 C1444.9,328.7 1446.2,346.2 1445.7,354.1 C1445.2,362.0 1442.7,367.4 1440.1,368.6 C1437.5,369.8 1431.9,366.2 1429.9,361.4 C1427.9,356.6 1429.6,345.2 1428.0,339.6 C1426.4,334.0 1421.2,332.4 1420.3,327.5 C1419.4,322.6 1420.1,313.3 1422.7,310.5Z" fill="#efd4b0" /><path d="M1437.2,312.9 C1438.0,315.3 1441.1,320.6 1442.1,327.5 C1443.1,334.4 1443.5,347.7 1443.3,354.1 C1443.1,360.6 1441.2,364.2 1440.8,366.2" fill="none" stroke="#d99a86" stroke-width="5" stroke-linejoin="round" stroke-linecap="round" /><path d="M1454.2,203.9 C1457.0,199.1 1467.5,197.1 1471.1,201.5 C1474.7,205.9 1477.2,223.7 1476.0,230.6 C1474.8,237.5 1467.5,242.7 1463.9,242.7 C1460.3,242.7 1455.8,237.1 1454.2,230.6 C1452.6,224.1 1451.4,208.8 1454.2,203.9Z" fill="#ead8b6" opacity="0.7"/><path d="M1456.6,262.1 C1459.8,258.5 1473.6,256.0 1478.4,259.6 C1483.2,263.2 1485.3,276.2 1485.7,283.9 C1486.1,291.6 1484.4,302.9 1480.8,305.7 C1477.2,308.5 1467.5,304.9 1463.9,300.8 C1460.3,296.8 1460.2,287.8 1459.0,281.4 C1457.8,274.9 1453.4,265.7 1456.6,262.1Z" fill="#ead8b6" opacity="0.7"/><path d="M1485.7,276.6 C1486.5,270.2 1492.9,270.2 1495.3,276.6 C1497.7,283.1 1501.0,308.9 1500.2,315.3 C1499.4,321.8 1492.9,321.8 1490.5,315.3 C1488.1,308.9 1484.9,283.1 1485.7,276.6Z" fill="#ead8b6" opacity="0.7"/><path d="M1461.4,288.7 C1462.2,286.3 1472.0,288.3 1476.0,291.1 C1480.0,293.9 1486.5,303.3 1485.7,305.7 C1484.9,308.1 1475.1,308.5 1471.1,305.7 C1467.0,302.9 1460.6,291.1 1461.4,288.7Z" fill="#ead8b6" opacity="0.7"/><path d="M1492.9,400.1 C1495.3,396.8 1506.3,396.8 1509.9,400.1 C1513.5,403.4 1517.1,416.7 1514.7,420.0 C1512.3,423.3 1498.9,423.3 1495.3,420.0 C1491.7,416.7 1490.5,403.4 1492.9,400.1Z" fill="#ead8b6" opacity="0.7"/><polygon points="1471,201 1481,201 1487,243 1498,291 1507.5,340 1519.6,388 1528,420 1536.5,444 1546,468 1551,488 1544,488 1537.7,468 1529,444 1517,420 1510,388 1495,340 1482,291 1473.5,243" fill="#cfa045" /><path d="M1350.0,451.5 C1354.0,441.8 1366.1,452.7 1374.2,453.9 C1382.3,455.1 1392.3,459.6 1398.4,458.8 C1404.5,458.0 1407.4,445.5 1410.6,449.1 C1413.8,452.7 1415.8,472.1 1417.8,480.6 C1419.8,489.1 1420.7,493.8 1422.7,499.9 C1424.7,505.9 1425.9,509.0 1429.9,516.9 C1433.9,524.8 1448.1,542.4 1446.9,547.2 C1445.7,552.1 1432.8,548.2 1422.7,546.0 C1412.6,543.8 1396.4,537.9 1386.3,533.9 C1376.2,529.9 1368.1,525.3 1362.1,521.7 C1356.0,518.1 1352.0,523.8 1350.0,512.1 C1348.0,500.4 1346.0,461.2 1350.0,451.5Z" fill="#c2d8c2" /><path d="M1386.3,453.9 C1389.9,449.9 1404.9,447.4 1410.6,453.9 C1416.3,460.4 1422.3,485.0 1420.3,492.7 C1418.3,500.4 1403.7,502.3 1398.4,499.9 C1393.2,497.5 1390.8,485.8 1388.8,478.1 C1386.8,470.4 1382.7,457.9 1386.3,453.9Z" fill="#b6cdb8" opacity="0.7"/><path d="M1350.0,420.0 C1356.0,415.1 1379.0,415.1 1386.3,420.0 C1393.6,424.9 1395.6,443.9 1393.6,449.1 C1391.6,454.4 1381.5,451.5 1374.2,451.5 C1366.9,451.5 1354.0,454.4 1350.0,449.1 C1346.0,443.9 1344.0,424.9 1350.0,420.0Z" fill="#f3eecb" /><path d="M1410.6,420.0 C1411.8,409.9 1428.8,413.9 1434.8,420.0 C1440.8,426.1 1443.7,444.2 1446.9,456.3 C1450.1,468.4 1455.0,485.4 1454.2,492.7 C1453.4,500.0 1446.5,501.9 1442.1,499.9 C1437.6,497.9 1432.8,493.9 1427.5,480.6 C1422.2,467.3 1409.4,430.1 1410.6,420.0Z" fill="#cfdfc8" /><path d="M1422.7,451.5 C1423.1,446.2 1437.3,453.5 1442.1,461.2 C1446.9,468.9 1452.1,492.2 1451.7,497.5 C1451.3,502.8 1444.4,500.4 1439.6,492.7 C1434.8,485.0 1422.3,456.8 1422.7,451.5Z" fill="#efd8b0" opacity="0.9"/><polygon points="1434.8,420.0 1459.0,420.0 1471.1,444.2 1480.8,468.4 1495.3,499.9 1505.0,521.7 1514.7,550.8 1524.4,579.9 1530.5,594.4 1534.1,625.9 1531.7,633.2 1524.4,630.8 1509.9,618.6 1505.0,604.1 1495.3,589.6 1485.7,570.2 1476.0,546.0 1466.3,526.6 1454.2,499.9 1446.9,478.1 1442.1,453.9" fill="#c88e78" /><path d="M1480.8,565.3 C1483.2,562.9 1491.9,566.2 1495.3,570.2 C1498.7,574.2 1499.2,582.7 1501.4,589.6 C1503.6,596.5 1508.1,606.1 1508.7,611.4 C1509.3,616.6 1507.8,622.7 1505.0,621.1 C1502.2,619.5 1495.7,607.8 1491.7,601.7 C1487.7,595.6 1482.6,590.8 1480.8,584.7 C1479.0,578.6 1478.4,567.7 1480.8,565.3Z" fill="#c8dcc6" /><path d="M1485.7,575.0 C1487.3,573.4 1494.1,576.7 1495.3,579.9 C1496.5,583.1 1494.5,592.8 1492.9,594.4 C1491.3,596.0 1486.9,592.8 1485.7,589.6 C1484.5,586.4 1484.1,576.6 1485.7,575.0Z" fill="#efd8b0" /><path d="M1495.3,499.9 C1498.1,499.1 1512.3,509.2 1517.2,516.9 C1522.1,524.6 1525.6,541.1 1524.4,546.0 C1523.2,550.9 1513.9,550.0 1509.9,546.0 C1505.9,542.0 1502.6,529.4 1500.2,521.7 C1497.8,514.0 1492.5,500.7 1495.3,499.9Z" fill="#eed8b2" opacity="0.9"/><path d="M1509.9,548.4 C1511.5,546.8 1521.2,549.7 1524.4,555.7 C1527.6,561.8 1530.1,579.5 1529.3,584.7 C1528.5,590.0 1522.0,590.4 1519.6,587.2 C1517.2,584.0 1516.3,571.8 1514.7,565.3 C1513.1,558.8 1508.3,550.0 1509.9,548.4Z" fill="#eed8b2" opacity="0.9"/><path d="M1463.9,507.2 C1465.7,505.4 1474.0,505.6 1476.0,507.2 C1478.0,508.8 1477.8,515.1 1476.0,516.9 C1474.2,518.7 1467.1,519.7 1465.1,518.1 C1463.1,516.5 1462.1,509.0 1463.9,507.2Z" fill="#8c8f92" /><path d="M1505.0,589.6 C1507.0,588.4 1517.6,592.0 1519.6,594.4 C1521.6,596.8 1519.2,602.9 1517.2,604.1 C1515.2,605.3 1509.5,604.1 1507.5,601.7 C1505.5,599.3 1503.0,590.8 1505.0,589.6Z" fill="#88b050" /><path d="M1490.5,560.5 C1492.3,560.3 1499.0,563.7 1500.2,565.3 C1501.4,566.9 1499.6,570.0 1497.8,570.2 C1496.0,570.4 1490.5,568.2 1489.3,566.6 C1488.1,565.0 1488.7,560.7 1490.5,560.5Z" fill="#7d8a8a" /><path d="M1490.5,420.0 C1494.5,415.1 1513.9,415.1 1519.6,420.0 C1525.2,424.9 1526.0,441.8 1524.4,449.1 C1522.8,456.4 1514.8,463.6 1509.9,463.6 C1505.1,463.6 1498.5,456.4 1495.3,449.1 C1492.1,441.8 1486.5,424.9 1490.5,420.0Z" fill="#e8d6b8" opacity="0.6"/><path d="M1500.2,449.1 C1504.2,446.3 1526.8,452.4 1534.1,458.8 C1541.4,465.2 1545.4,482.6 1543.8,487.8 C1542.2,493.1 1530.1,492.3 1524.4,490.3 C1518.8,488.3 1513.9,482.6 1509.9,475.7 C1505.9,468.8 1496.2,451.9 1500.2,449.1Z" fill="#e8d6b8" opacity="0.6"/><path d="M1529.3,444.2 C1530.5,440.2 1539.0,440.2 1541.4,444.2 C1543.8,448.2 1545.0,464.4 1543.8,468.4 C1542.6,472.4 1536.5,472.4 1534.1,468.4 C1531.7,464.4 1528.1,448.2 1529.3,444.2Z" fill="#e8d6b8" opacity="0.6"/><polygon points="1141.2,513.3 1297.4,513.3 1297.4,533.9 1279.3,536.3 1274.4,546.0 1279.3,565.3 1274.4,577.5 1245.3,582.3 1230.8,579.9 1204.2,577.5" fill="#f3ebc2" /><path d="M1274.4,536.3 C1278.3,534.3 1293.6,530.7 1297.4,533.9 C1301.2,537.1 1299.6,548.9 1297.4,555.7 C1295.2,562.6 1289.1,569.8 1284.1,575.0 C1279.1,580.2 1275.3,585.2 1267.2,587.2 C1259.1,589.2 1241.8,588.2 1235.7,587.2 C1229.6,586.2 1228.4,582.0 1230.8,581.1 C1233.2,580.2 1242.8,582.5 1250.2,581.8 C1257.6,581.1 1270.1,579.8 1274.9,577.0 C1279.8,574.2 1279.5,570.1 1279.3,564.9 C1279.1,559.7 1274.7,550.8 1273.9,546.0 C1273.1,541.2 1270.5,538.3 1274.4,536.3Z" fill="#e9c255" /><path d="M1279.3,536.3 C1280.3,532.7 1294.4,519.4 1297.4,533.9 C1300.4,548.4 1299.6,609.0 1297.4,623.5 C1295.2,638.0 1288.7,626.0 1284.1,621.1 C1279.5,616.2 1272.8,600.0 1269.6,594.4 C1266.4,588.8 1262.3,590.4 1264.7,587.2 C1267.1,584.0 1279.6,580.2 1284.1,575.0 C1288.5,569.8 1292.2,562.2 1291.4,555.7 C1290.6,549.2 1278.3,539.9 1279.3,536.3Z" fill="#d8e6e2" /><path d="M1284.1,541.1 C1285.7,538.7 1294.2,538.7 1296.2,541.1 C1298.2,543.5 1297.8,553.3 1296.2,555.7 C1294.6,558.1 1288.5,558.1 1286.5,555.7 C1284.5,553.3 1282.5,543.5 1284.1,541.1Z" fill="#78b594" /><path d="M1269.6,579.9 C1271.2,575.5 1285.0,573.5 1289.0,577.5 C1293.0,581.5 1295.4,599.7 1293.8,604.1 C1292.2,608.5 1283.3,608.1 1279.3,604.1 C1275.3,600.1 1268.0,584.3 1269.6,579.9Z" fill="#efd0cc" /><polygon points="1204.2,577.5 1230.8,579.9 1235.7,587.2 1267.2,589.6 1284.1,596.8 1296.2,604.1 1295.0,625.9 1284.1,631.2 1269.6,625.9 1257.5,609.0 1235.7,599.3 1218.7,587.2" fill="#8aad8c" /><path d="M1230.8,584.7 C1234.0,583.5 1251.0,585.2 1255.0,587.2 C1259.0,589.2 1258.2,595.6 1255.0,596.8 C1251.8,598.0 1239.7,596.4 1235.7,594.4 C1231.7,592.4 1227.6,585.9 1230.8,584.7Z" fill="#e2b4b0" /><path d="M1269.6,613.8 C1272.8,612.6 1290.2,616.2 1293.8,618.6 C1297.4,621.0 1294.6,627.1 1291.4,628.3 C1288.2,629.5 1278.0,628.3 1274.4,625.9 C1270.8,623.5 1266.4,615.0 1269.6,613.8Z" fill="#d9c070" /><path d="M1276.8,594.4 C1278.0,593.2 1282.9,593.2 1284.1,594.4 C1285.3,595.6 1285.3,600.5 1284.1,601.7 C1282.9,602.9 1278.0,602.9 1276.8,601.7 C1275.6,600.5 1275.6,595.6 1276.8,594.4Z" fill="#8a7a40" /><path d="M1291.4,560.5 C1292.2,559.3 1295.4,559.3 1296.2,560.5 C1297.0,561.7 1297.0,566.6 1296.2,567.8 C1295.4,569.0 1292.2,569.0 1291.4,567.8 C1290.6,566.6 1290.6,561.7 1291.4,560.5Z" fill="#7a6a30" /><path d="M1226.0,429.7 L1250.2,441.8 L1284.1,468.4 L1318.0,512.1 L1350.0,546.0" fill="none" stroke="#444" stroke-width="1" stroke-linejoin="round" stroke-linecap="round" stroke-dasharray="5 2" opacity="0.55"/><path d="M1141.2,513.3 L1204.2,577.5" fill="none" stroke="#333" stroke-width="1.2" stroke-linejoin="round" stroke-linecap="round" stroke-dasharray="4 1.5" opacity="0.7"/><path d="M1264.7,513.3 L1297.4,589.6" fill="none" stroke="#5a6a7a" stroke-width="0.8" stroke-linejoin="round" stroke-linecap="round" opacity="0.6"/><path d="M1156.3,201.5 L1221.7,262.1 L1275.0,315.3 L1338.0,388.0" fill="none" stroke="#444" stroke-width="0.9" stroke-linejoin="round" stroke-linecap="round" stroke-dasharray="4 2" opacity="0.6"/><path d="M1422.7,487.8 L1446.9,521.7 L1466.3,555.7" fill="none" stroke="#444" stroke-width="1" stroke-linejoin="round" stroke-linecap="round" stroke-dasharray="5 2" opacity="0.55"/><path d="M1519.6,499.9 L1534.1,529.0 L1543.8,560.5" fill="none" stroke="#444" stroke-width="1" stroke-linejoin="round" stroke-linecap="round" stroke-dasharray="5 2" opacity="0.55"/><path d="M1230.0,329.1 L1302.7,360.6 L1334.2,382.4 L1356.0,392.1 L1385.0,413.9 L1414.1,435.7" fill="none" stroke="#4a5a6a" stroke-width="0.7" stroke-linejoin="round" stroke-linecap="round" opacity="0.6"/><path d="M1278.4,348.4 L1322.1,396.9 L1339.0,435.7 L1356.0,469.6" fill="none" stroke="#6a4a3a" stroke-width="0.7" stroke-linejoin="round" stroke-linecap="round" opacity="0.5"/><path d="M1135,194 L1557.5,194 L1557,645 L1119.4,652.6 L1129,508 L1131.5,472 L1135,194" fill="none" stroke="#2a2a2a" stroke-width="1.4" stroke-linejoin="round" stroke-linecap="round" /><path d="M1128,508 L1302,508 L1301,649" fill="none" stroke="#2a2a2a" stroke-width="1.3" stroke-linejoin="round" stroke-linecap="round" /><path d="M1142,201 L1552,201" fill="none" stroke="#555" stroke-width="0.6" stroke-linejoin="round" stroke-linecap="round" /><rect x="1147" y="185" width="35" height="0.9" fill="#888" opacity="0.45"/><rect x="1149" y="187" width="31" height="0.9" fill="#888" opacity="0.45"/><rect x="1145" y="189" width="40" height="0.9" fill="#888" opacity="0.45"/><rect x="1141" y="191" width="47" height="0.9" fill="#888" opacity="0.45"/><rect x="1142" y="193" width="45" height="0.9" fill="#888" opacity="0.45"/><rect x="1338" y="188" width="18" height="2.5" fill="#555" opacity="0.8"/><rect x="1511" y="188" width="40" height="1.2" fill="#777" opacity="0.6"/><rect x="1508" y="190.5" width="44" height="1" fill="#888" opacity="0.5"/><rect x="1566" y="200" width="12" height="1.5" fill="#666" opacity="0.6"/><rect x="1561" y="207" width="9.5" height="6" fill="#d8d498" stroke="#777" stroke-width="0.4"/><rect x="1576" y="207" width="10" height="6" fill="#e8b0a8" stroke="#777" stroke-width="0.4"/><rect x="1562" y="204.5" width="8" height="1" fill="#888" opacity="0.5"/><rect x="1576" y="204.5" width="10" height="1" fill="#888" opacity="0.5"/><rect x="1561" y="217.9" width="9.5" height="6" fill="#d8ecec" stroke="#777" stroke-width="0.4"/><rect x="1576" y="217.9" width="10" height="6" fill="#6a9a40" stroke="#777" stroke-width="0.4"/><rect x="1562" y="215.4" width="8" height="1" fill="#888" opacity="0.5"/><rect x="1576" y="215.4" width="10" height="1" fill="#888" opacity="0.5"/><rect x="1561" y="229.5" width="9.5" height="6" fill="#a8c8d8" stroke="#777" stroke-width="0.4"/><rect x="1576" y="229.5" width="10" height="6" fill="#8a9a98" stroke="#777" stroke-width="0.4"/><rect x="1562" y="227.0" width="8" height="1" fill="#888" opacity="0.5"/><rect x="1576" y="227.0" width="10" height="1" fill="#888" opacity="0.5"/><rect x="1561" y="239.7" width="9.5" height="6" fill="#d8d8c8" stroke="#777" stroke-width="0.4"/><rect x="1576" y="239.7" width="10" height="6" fill="#c8a070" stroke="#777" stroke-width="0.4"/><rect x="1562" y="237.2" width="8" height="1" fill="#888" opacity="0.5"/><rect x="1576" y="237.2" width="10" height="1" fill="#888" opacity="0.5"/><rect x="1561" y="251.3" width="9.5" height="6" fill="#a8b8c0" stroke="#777" stroke-width="0.4"/><rect x="1576" y="251.3" width="10" height="6" fill="#6aa050" stroke="#777" stroke-width="0.4"/><rect x="1562" y="248.8" width="8" height="1" fill="#888" opacity="0.5"/><rect x="1576" y="248.8" width="10" height="1" fill="#888" opacity="0.5"/><rect x="1561" y="262" width="9.5" height="6" fill="#e8d850" stroke="#777" stroke-width="0.4"/><rect x="1576" y="262" width="10" height="6" fill="#e0b040" stroke="#777" stroke-width="0.4"/><rect x="1562" y="259.5" width="8" height="1" fill="#888" opacity="0.5"/><rect x="1576" y="259.5" width="10" height="1" fill="#888" opacity="0.5"/><rect x="1561" y="272.4" width="9.5" height="6" fill="#f4d8d8" stroke="#777" stroke-width="0.4"/><rect x="1576" y="272.4" width="10" height="6" fill="#88b060" stroke="#777" stroke-width="0.4"/><rect x="1562" y="269.9" width="8" height="1" fill="#888" opacity="0.5"/><rect x="1576" y="269.9" width="10" height="1" fill="#888" opacity="0.5"/><rect x="1561" y="282.8" width="9.5" height="6" fill="#88b888" stroke="#777" stroke-width="0.4"/><rect x="1576" y="282.8" width="10" height="6" fill="#e8a8a8" stroke="#777" stroke-width="0.4"/><rect x="1562" y="280.3" width="8" height="1" fill="#888" opacity="0.5"/><rect x="1576" y="280.3" width="10" height="1" fill="#888" opacity="0.5"/><rect x="1561" y="293.7" width="9.5" height="6" fill="#c8e0c0" stroke="#777" stroke-width="0.4"/><rect x="1576" y="293.7" width="10" height="6" fill="#e8c050" stroke="#777" stroke-width="0.4"/><rect x="1562" y="291.2" width="8" height="1" fill="#888" opacity="0.5"/><rect x="1576" y="291.2" width="10" height="1" fill="#888" opacity="0.5"/><rect x="1561" y="304.4" width="9.5" height="6" fill="#90b8a8" stroke="#777" stroke-width="0.4"/><rect x="1576" y="304.4" width="10" height="6" fill="#90b0b8" stroke="#777" stroke-width="0.4"/><rect x="1562" y="301.9" width="8" height="1" fill="#888" opacity="0.5"/><rect x="1576" y="301.9" width="10" height="1" fill="#888" opacity="0.5"/><rect x="1561" y="314.8" width="9.5" height="6" fill="#d8d860" stroke="#777" stroke-width="0.4"/><rect x="1576" y="314.8" width="10" height="6" fill="#f4f0d0" stroke="#777" stroke-width="0.4"/><rect x="1562" y="312.3" width="8" height="1" fill="#888" opacity="0.5"/><rect x="1576" y="312.3" width="10" height="1" fill="#888" opacity="0.5"/><rect x="1561" y="325.7" width="9.5" height="6" fill="#e8a888" stroke="#777" stroke-width="0.4"/><rect x="1576" y="325.7" width="10" height="6" fill="#c8dcc8" stroke="#777" stroke-width="0.4"/><rect x="1562" y="323.2" width="8" height="1" fill="#888" opacity="0.5"/><rect x="1576" y="323.2" width="10" height="1" fill="#888" opacity="0.5"/><rect x="1561" y="336.6" width="9.5" height="6" fill="#d8a030" stroke="#777" stroke-width="0.4"/><rect x="1576" y="336.6" width="10" height="6" fill="#88b090" stroke="#777" stroke-width="0.4"/><rect x="1562" y="334.1" width="8" height="1" fill="#888" opacity="0.5"/><rect x="1576" y="334.1" width="10" height="1" fill="#888" opacity="0.5"/><rect x="1561" y="346.7" width="9.5" height="6" fill="#f0d8a8" stroke="#777" stroke-width="0.4"/><rect x="1576" y="346.7" width="10" height="6" fill="#d8c860" stroke="#777" stroke-width="0.4"/><rect x="1562" y="344.2" width="8" height="1" fill="#888" opacity="0.5"/><rect x="1576" y="344.2" width="10" height="1" fill="#888" opacity="0.5"/><rect x="1560" y="390" width="10" height="7" fill="#6f8aa8" opacity="0.28"/><rect x="1575" y="390" width="11" height="7" fill="#7a8a9a" opacity="0.28"/><rect x="1560" y="398" width="10" height="1" fill="#666" opacity="0.4"/><rect x="1575" y="398" width="11" height="1" fill="#666" opacity="0.4"/><rect x="1560" y="402" width="10" height="7" fill="#555" opacity="0.28"/><rect x="1575" y="402" width="11" height="7" fill="#4a6a90" opacity="0.28"/><rect x="1560" y="410" width="10" height="1" fill="#666" opacity="0.4"/><rect x="1575" y="410" width="11" height="1" fill="#666" opacity="0.4"/><rect x="1560" y="414" width="10" height="7" fill="#7a8a9a" opacity="0.28"/><rect x="1575" y="414" width="11" height="7" fill="#6f8aa8" opacity="0.28"/><rect x="1560" y="422" width="10" height="1" fill="#666" opacity="0.4"/><rect x="1575" y="422" width="11" height="1" fill="#666" opacity="0.4"/><rect x="1560" y="426" width="10" height="7" fill="#4a6a90" opacity="0.28"/><rect x="1575" y="426" width="11" height="7" fill="#555" opacity="0.28"/><rect x="1560" y="434" width="10" height="1" fill="#666" opacity="0.4"/><rect x="1575" y="434" width="11" height="1" fill="#666" opacity="0.4"/><rect x="1560" y="438" width="10" height="7" fill="#6f8aa8" opacity="0.28"/><rect x="1575" y="438" width="11" height="7" fill="#7a8a9a" opacity="0.28"/><rect x="1560" y="446" width="10" height="1" fill="#666" opacity="0.4"/><rect x="1575" y="446" width="11" height="1" fill="#666" opacity="0.4"/><rect x="1560" y="450" width="10" height="7" fill="#555" opacity="0.28"/><rect x="1575" y="450" width="11" height="7" fill="#4a6a90" opacity="0.28"/><rect x="1560" y="458" width="10" height="1" fill="#666" opacity="0.4"/><rect x="1575" y="458" width="11" height="1" fill="#666" opacity="0.4"/><rect x="1560" y="462" width="10" height="7" fill="#7a8a9a" opacity="0.28"/><rect x="1575" y="462" width="11" height="7" fill="#6f8aa8" opacity="0.28"/><rect x="1560" y="470" width="10" height="1" fill="#666" opacity="0.4"/><rect x="1575" y="470" width="11" height="1" fill="#666" opacity="0.4"/><rect x="1560" y="474" width="10" height="7" fill="#4a6a90" opacity="0.28"/><rect x="1575" y="474" width="11" height="7" fill="#555" opacity="0.28"/><rect x="1560" y="482" width="10" height="1" fill="#666" opacity="0.4"/><rect x="1575" y="482" width="11" height="1" fill="#666" opacity="0.4"/><rect x="1560" y="486" width="10" height="7" fill="#6f8aa8" opacity="0.28"/><rect x="1575" y="486" width="11" height="7" fill="#7a8a9a" opacity="0.28"/><rect x="1560" y="494" width="10" height="1" fill="#666" opacity="0.4"/><rect x="1575" y="494" width="11" height="1" fill="#666" opacity="0.4"/><rect x="1560" y="498" width="10" height="7" fill="#555" opacity="0.28"/><rect x="1575" y="498" width="11" height="7" fill="#4a6a90" opacity="0.28"/><rect x="1560" y="506" width="10" height="1" fill="#666" opacity="0.4"/><rect x="1575" y="506" width="11" height="1" fill="#666" opacity="0.4"/><rect x="1560" y="510" width="10" height="7" fill="#7a8a9a" opacity="0.28"/><rect x="1575" y="510" width="11" height="7" fill="#6f8aa8" opacity="0.28"/><rect x="1560" y="518" width="10" height="1" fill="#666" opacity="0.4"/><rect x="1575" y="518" width="11" height="1" fill="#666" opacity="0.4"/><rect x="1560" y="522" width="10" height="7" fill="#4a6a90" opacity="0.28"/><rect x="1575" y="522" width="11" height="7" fill="#555" opacity="0.28"/><rect x="1560" y="530" width="10" height="1" fill="#666" opacity="0.4"/><rect x="1575" y="530" width="11" height="1" fill="#666" opacity="0.4"/><rect x="1560" y="534" width="10" height="7" fill="#6f8aa8" opacity="0.28"/><rect x="1575" y="534" width="11" height="7" fill="#7a8a9a" opacity="0.28"/><rect x="1560" y="542" width="10" height="1" fill="#666" opacity="0.4"/><rect x="1575" y="542" width="11" height="1" fill="#666" opacity="0.4"/><rect x="1558" y="384" width="12" height="1.2" fill="#666" opacity="0.6"/><rect x="1517.2" y="214.8" width="2.2" height="2.2" fill="#333" opacity="0.7"/><rect x="1519.6" y="225.7" width="2.2" height="2.2" fill="#333" opacity="0.7"/><rect x="1520.8" y="236.6" width="2.2" height="2.2" fill="#333" opacity="0.7"/><rect x="1524.4" y="249.9" width="2.2" height="2.2" fill="#333" opacity="0.7"/><rect x="1526.8" y="260.8" width="2.2" height="2.2" fill="#333" opacity="0.7"/><rect x="1529.3" y="271.7" width="2.2" height="2.2" fill="#333" opacity="0.7"/><rect x="1531.7" y="293.5" width="2.2" height="2.2" fill="#333" opacity="0.7"/><rect x="1536.5" y="321.4" width="2.2" height="2.2" fill="#333" opacity="0.7"/><rect x="1539.0" y="332.3" width="2.2" height="2.2" fill="#333" opacity="0.7"/><rect x="1541.4" y="345.6" width="2.2" height="2.2" fill="#333" opacity="0.7"/><rect x="1542.6" y="357.7" width="2.2" height="2.2" fill="#333" opacity="0.7"/><rect x="1543.8" y="368.6" width="2.2" height="2.2" fill="#333" opacity="0.7"/><rect x="1350.0" y="575.0" width="2.2" height="2.2" fill="#333" opacity="0.7"/><rect x="1359.7" y="577.0" width="2.2" height="2.2" fill="#333" opacity="0.7"/><rect x="1369.4" y="577.9" width="2.2" height="2.2" fill="#333" opacity="0.7"/><rect x="1379.1" y="579.9" width="2.2" height="2.2" fill="#333" opacity="0.7"/><rect x="1388.8" y="581.8" width="2.2" height="2.2" fill="#333" opacity="0.7"/><rect x="1398.4" y="583.8" width="2.2" height="2.2" fill="#333" opacity="0.7"/><rect x="1408.1" y="586.7" width="2.2" height="2.2" fill="#333" opacity="0.7"/><rect x="1420.3" y="589.6" width="2.2" height="2.2" fill="#333" opacity="0.7"/><rect x="1454.2" y="605.3" width="2.2" height="2.2" fill="#333" opacity="0.7"/><rect x="1463.9" y="611.4" width="2.2" height="2.2" fill="#333" opacity="0.7"/><rect x="1473.5" y="618.6" width="2.2" height="2.2" fill="#333" opacity="0.7"/><rect x="1480.8" y="628.3" width="2.2" height="2.2" fill="#333" opacity="0.7"/><rect x="1332.6" y="565.3" width="2.2" height="2.2" fill="#333" opacity="0.7"/><rect x="1342.2" y="567.8" width="2.2" height="2.2" fill="#333" opacity="0.7"/><rect x="1210" y="655" width="30" height="1" fill="#777" opacity="0.5"/><rect x="1305" y="653" width="70" height="1" fill="#555" opacity="0.5"/><rect x="1125" y="656" width="45" height="1" fill="#777" opacity="0.5"/><rect x="1125" y="659" width="40" height="1" fill="#777" opacity="0.4"/><line x1="1352.6" y1="361.5" x2="1363.5" y2="363.5" stroke="#5a4a3a" stroke-width="0.5" opacity="0.4"/><line x1="1354.5" y1="451.6" x2="1351.9" y2="464.9" stroke="#5a4a3a" stroke-width="0.5" opacity="0.4"/><line x1="1370.6" y1="481.5" x2="1375.1" y2="492.2" stroke="#5a4a3a" stroke-width="0.5" opacity="0.4"/><line x1="1363.8" y1="472.7" x2="1363.9" y2="484.2" stroke="#6a5040" stroke-width="0.5" opacity="0.4"/><line x1="1174.2" y1="332.8" x2="1174.3" y2="341.6" stroke="#a05a40" stroke-width="0.5" opacity="0.4"/><line x1="1334.2" y1="218.2" x2="1326.7" y2="230.9" stroke="#6a5040" stroke-width="0.5" opacity="0.4"/><line x1="1275.7" y1="354.7" x2="1275.8" y2="369.9" stroke="#5a4a3a" stroke-width="0.5" opacity="0.4"/><line x1="1192.8" y1="309.7" x2="1198.3" y2="325.0" stroke="#5a4a3a" stroke-width="0.5" opacity="0.4"/><line x1="1311.2" y1="442.5" x2="1300.4" y2="456.7" stroke="#a05a40" stroke-width="0.5" opacity="0.4"/><line x1="1373.5" y1="316.3" x2="1383.4" y2="316.5" stroke="#6a5040" stroke-width="0.5" opacity="0.4"/><line x1="1381.7" y1="340.9" x2="1396.5" y2="347.0" stroke="#5a4a3a" stroke-width="0.5" opacity="0.4"/><line x1="1361.8" y1="375.8" x2="1365.3" y2="385.9" stroke="#a05a40" stroke-width="0.5" opacity="0.4"/><line x1="1275.6" y1="224.1" x2="1281.8" y2="224.1" stroke="#5a4a3a" stroke-width="0.5" opacity="0.4"/><line x1="1169.6" y1="292.3" x2="1174.5" y2="304.2" stroke="#6a5040" stroke-width="0.5" opacity="0.4"/><line x1="1378.7" y1="409.2" x2="1388.8" y2="413.0" stroke="#a05a40" stroke-width="0.5" opacity="0.4"/><line x1="1330.8" y1="337.9" x2="1343.8" y2="344.2" stroke="#6a5040" stroke-width="0.5" opacity="0.4"/><line x1="1344.9" y1="291.1" x2="1336.0" y2="292.5" stroke="#5a4a3a" stroke-width="0.5" opacity="0.4"/><line x1="1339.6" y1="480.4" x2="1334.3" y2="494.5" stroke="#3a4a5a" stroke-width="0.5" opacity="0.4"/><line x1="1345.4" y1="357.1" x2="1349.8" y2="357.5" stroke="#6a5040" stroke-width="0.5" opacity="0.4"/><line x1="1327.6" y1="286.0" x2="1324.7" y2="294.4" stroke="#6a5040" stroke-width="0.5" opacity="0.4"/><line x1="1499.5" y1="544.4" x2="1492.0" y2="552.0" stroke="#3a4a5a" stroke-width="0.5" opacity="0.4"/><line x1="1425.7" y1="404.3" x2="1422.1" y2="408.1" stroke="#3a4a5a" stroke-width="0.5" opacity="0.4"/><line x1="1400.3" y1="354.8" x2="1399.4" y2="360.6" stroke="#5a4a3a" stroke-width="0.5" opacity="0.4"/><line x1="1153.0" y1="294.4" x2="1152.9" y2="309.1" stroke="#6a5040" stroke-width="0.5" opacity="0.4"/><line x1="1243.9" y1="384.9" x2="1259.3" y2="391.6" stroke="#6a5040" stroke-width="0.5" opacity="0.4"/><line x1="1462.3" y1="427.9" x2="1448.4" y2="436.3" stroke="#3a4a5a" stroke-width="0.5" opacity="0.4"/><line x1="1351.0" y1="430.8" x2="1361.2" y2="431.4" stroke="#3a4a5a" stroke-width="0.5" opacity="0.4"/><line x1="1350.6" y1="412.8" x2="1338.1" y2="423.4" stroke="#5a4a3a" stroke-width="0.5" opacity="0.4"/><line x1="1445.5" y1="423.9" x2="1442.7" y2="438.3" stroke="#5a4a3a" stroke-width="0.5" opacity="0.4"/><line x1="1316.2" y1="469.9" x2="1316.0" y2="481.1" stroke="#6a5040" stroke-width="0.5" opacity="0.4"/><line x1="1319.8" y1="435.1" x2="1321.0" y2="452.3" stroke="#6a5040" stroke-width="0.5" opacity="0.4"/><line x1="1504.7" y1="592.9" x2="1512.9" y2="599.0" stroke="#a05a40" stroke-width="0.5" opacity="0.4"/><line x1="1170.5" y1="306.6" x2="1183.5" y2="309.7" stroke="#5a4a3a" stroke-width="0.5" opacity="0.4"/><line x1="1311.6" y1="427.4" x2="1314.9" y2="433.2" stroke="#6a5040" stroke-width="0.5" opacity="0.4"/><line x1="1274.8" y1="402.4" x2="1269.2" y2="409.9" stroke="#6a5040" stroke-width="0.5" opacity="0.4"/><line x1="1343.3" y1="229.2" x2="1328.3" y2="229.9" stroke="#5a4a3a" stroke-width="0.5" opacity="0.4"/><line x1="1175.0" y1="320.4" x2="1168.8" y2="322.3" stroke="#3a4a5a" stroke-width="0.5" opacity="0.4"/><line x1="1301.5" y1="436.6" x2="1301.0" y2="447.5" stroke="#6a5040" stroke-width="0.5" opacity="0.4"/><line x1="1412.5" y1="387.7" x2="1429.2" y2="391.6" stroke="#5a4a3a" stroke-width="0.5" opacity="0.4"/><line x1="1235.7" y1="249.0" x2="1239.8" y2="251.3" stroke="#3a4a5a" stroke-width="0.5" opacity="0.4"/><line x1="1350.7" y1="291.4" x2="1353.0" y2="304.6" stroke="#6a5040" stroke-width="0.5" opacity="0.4"/><line x1="1278.4" y1="209.0" x2="1281.3" y2="212.0" stroke="#3a4a5a" stroke-width="0.5" opacity="0.4"/><line x1="1344.1" y1="308.9" x2="1346.3" y2="321.9" stroke="#a05a40" stroke-width="0.5" opacity="0.4"/><line x1="1400.0" y1="440.7" x2="1383.5" y2="446.7" stroke="#6a5040" stroke-width="0.5" opacity="0.4"/><line x1="1419.7" y1="480.2" x2="1422.4" y2="488.7" stroke="#5a4a3a" stroke-width="0.5" opacity="0.4"/><line x1="1311.3" y1="225.3" x2="1306.7" y2="233.4" stroke="#6a5040" stroke-width="0.5" opacity="0.4"/><line x1="1377.3" y1="505.1" x2="1383.8" y2="506.0" stroke="#6a5040" stroke-width="0.5" opacity="0.4"/><line x1="1317.2" y1="316.6" x2="1299.7" y2="318.7" stroke="#6a5040" stroke-width="0.5" opacity="0.4"/><line x1="1263.7" y1="357.5" x2="1273.0" y2="357.6" stroke="#a05a40" stroke-width="0.5" opacity="0.4"/><line x1="1296.8" y1="332.5" x2="1294.8" y2="337.3" stroke="#3a4a5a" stroke-width="0.5" opacity="0.4"/><line x1="1400.4" y1="515.3" x2="1391.6" y2="518.8" stroke="#6a5040" stroke-width="0.5" opacity="0.4"/><line x1="1425.2" y1="417.9" x2="1433.2" y2="427.8" stroke="#3a4a5a" stroke-width="0.5" opacity="0.4"/><line x1="1410.4" y1="505.4" x2="1413.7" y2="508.3" stroke="#3a4a5a" stroke-width="0.5" opacity="0.4"/><line x1="1290.0" y1="399.2" x2="1294.2" y2="399.8" stroke="#3a4a5a" stroke-width="0.5" opacity="0.4"/><line x1="1334.3" y1="202.5" x2="1322.6" y2="211.0" stroke="#5a4a3a" stroke-width="0.5" opacity="0.4"/><line x1="1171.3" y1="317.6" x2="1166.7" y2="322.7" stroke="#a05a40" stroke-width="0.5" opacity="0.4"/><line x1="1336.1" y1="368.9" x2="1337.0" y2="382.5" stroke="#5a4a3a" stroke-width="0.5" opacity="0.4"/><line x1="1384.5" y1="483.2" x2="1390.4" y2="484.6" stroke="#6a5040" stroke-width="0.5" opacity="0.4"/><line x1="1398.1" y1="505.2" x2="1395.9" y2="510.6" stroke="#a05a40" stroke-width="0.5" opacity="0.4"/><line x1="1165.8" y1="319.0" x2="1158.8" y2="330.7" stroke="#a05a40" stroke-width="0.5" opacity="0.4"/><line x1="1256.3" y1="427.8" x2="1257.5" y2="438.2" stroke="#5a4a3a" stroke-width="0.5" opacity="0.4"/><line x1="1264.5" y1="238.7" x2="1265.2" y2="246.7" stroke="#5a4a3a" stroke-width="0.5" opacity="0.4"/><line x1="1318.6" y1="318.9" x2="1332.3" y2="329.5" stroke="#3a4a5a" stroke-width="0.5" opacity="0.4"/><line x1="1171.3" y1="240.6" x2="1165.9" y2="246.1" stroke="#6a5040" stroke-width="0.5" opacity="0.4"/><line x1="1335.2" y1="398.9" x2="1338.7" y2="403.7" stroke="#6a5040" stroke-width="0.5" opacity="0.4"/><line x1="1289.8" y1="254.1" x2="1294.1" y2="261.5" stroke="#6a5040" stroke-width="0.5" opacity="0.4"/><line x1="1288.3" y1="373.5" x2="1276.0" y2="373.5" stroke="#6a5040" stroke-width="0.5" opacity="0.4"/><line x1="1505.7" y1="532.7" x2="1498.6" y2="536.2" stroke="#5a4a3a" stroke-width="0.5" opacity="0.4"/><line x1="1246.4" y1="425.3" x2="1254.1" y2="430.5" stroke="#a05a40" stroke-width="0.5" opacity="0.4"/><line x1="1489.5" y1="557.5" x2="1482.8" y2="572.8" stroke="#3a4a5a" stroke-width="0.5" opacity="0.4"/><line x1="1429.8" y1="398.9" x2="1420.5" y2="408.1" stroke="#6a5040" stroke-width="0.5" opacity="0.4"/><line x1="1358.2" y1="276.0" x2="1360.3" y2="283.6" stroke="#6a5040" stroke-width="0.5" opacity="0.4"/><line x1="1297.0" y1="274.5" x2="1303.0" y2="277.8" stroke="#a05a40" stroke-width="0.5" opacity="0.4"/><line x1="1358.3" y1="399.9" x2="1365.6" y2="412.5" stroke="#a05a40" stroke-width="0.5" opacity="0.4"/><line x1="1196.9" y1="285.5" x2="1205.3" y2="287.9" stroke="#5a4a3a" stroke-width="0.5" opacity="0.4"/><line x1="1267.5" y1="362.7" x2="1261.8" y2="366.5" stroke="#5a4a3a" stroke-width="0.5" opacity="0.4"/><line x1="1304.7" y1="431.1" x2="1308.0" y2="439.2" stroke="#5a4a3a" stroke-width="0.5" opacity="0.4"/><line x1="1337.8" y1="453.1" x2="1343.6" y2="465.4" stroke="#3a4a5a" stroke-width="0.5" opacity="0.4"/><line x1="1311.7" y1="338.0" x2="1297.1" y2="347.6" stroke="#3a4a5a" stroke-width="0.5" opacity="0.4"/><line x1="1184.9" y1="268.8" x2="1183.9" y2="282.3" stroke="#a05a40" stroke-width="0.5" opacity="0.4"/><line x1="1142.5" y1="256.2" x2="1141.6" y2="260.6" stroke="#6a5040" stroke-width="0.5" opacity="0.4"/><line x1="1349.6" y1="393.0" x2="1345.6" y2="396.7" stroke="#6a5040" stroke-width="0.5" opacity="0.4"/><line x1="1348.1" y1="456.9" x2="1350.6" y2="463.6" stroke="#5a4a3a" stroke-width="0.5" opacity="0.4"/><line x1="1328.8" y1="304.1" x2="1341.2" y2="316.3" stroke="#6a5040" stroke-width="0.5" opacity="0.4"/><line x1="1163.7" y1="286.2" x2="1151.5" y2="290.8" stroke="#5a4a3a" stroke-width="0.5" opacity="0.4"/><line x1="1432.5" y1="422.6" x2="1446.5" y2="433.2" stroke="#6a5040" stroke-width="0.5" opacity="0.4"/><line x1="1324.8" y1="317.3" x2="1319.6" y2="319.2" stroke="#a05a40" stroke-width="0.5" opacity="0.4"/><line x1="1398.4" y1="431.4" x2="1399.3" y2="439.7" stroke="#a05a40" stroke-width="0.5" opacity="0.4"/><line x1="1315.9" y1="248.8" x2="1320.9" y2="250.1" stroke="#a05a40" stroke-width="0.5" opacity="0.4"/><line x1="1217.9" y1="360.9" x2="1213.7" y2="362.3" stroke="#a05a40" stroke-width="0.5" opacity="0.4"/><line x1="1301.1" y1="365.9" x2="1302.8" y2="381.0" stroke="#5a4a3a" stroke-width="0.5" opacity="0.4"/><line x1="1384.5" y1="316.1" x2="1379.2" y2="322.6" stroke="#6a5040" stroke-width="0.5" opacity="0.4"/><line x1="1423.2" y1="405.5" x2="1411.7" y2="415.2" stroke="#a05a40" stroke-width="0.5" opacity="0.4"/><line x1="1337.1" y1="204.8" x2="1329.1" y2="206.6" stroke="#3a4a5a" stroke-width="0.5" opacity="0.4"/><line x1="1380.7" y1="344.9" x2="1385.5" y2="352.6" stroke="#5a4a3a" stroke-width="0.5" opacity="0.4"/><line x1="1343.2" y1="372.9" x2="1351.7" y2="377.6" stroke="#5a4a3a" stroke-width="0.5" opacity="0.4"/><line x1="1331.3" y1="440.1" x2="1340.0" y2="444.9" stroke="#5a4a3a" stroke-width="0.5" opacity="0.4"/><line x1="1175.0" y1="243.3" x2="1175.1" y2="257.3" stroke="#a05a40" stroke-width="0.5" opacity="0.4"/><line x1="1314.7" y1="282.5" x2="1320.5" y2="287.9" stroke="#3a4a5a" stroke-width="0.5" opacity="0.4"/><line x1="1270.3" y1="374.9" x2="1259.2" y2="375.1" stroke="#3a4a5a" stroke-width="0.5" opacity="0.4"/><line x1="1324.3" y1="217.3" x2="1340.7" y2="217.5" stroke="#3a4a5a" stroke-width="0.5" opacity="0.4"/><line x1="1188.9" y1="284.2" x2="1176.7" y2="285.3" stroke="#5a4a3a" stroke-width="0.5" opacity="0.4"/><line x1="1318.5" y1="315.1" x2="1305.3" y2="326.2" stroke="#5a4a3a" stroke-width="0.5" opacity="0.4"/><line x1="1392.5" y1="512.6" x2="1394.6" y2="516.6" stroke="#6a5040" stroke-width="0.5" opacity="0.4"/><line x1="1197.6" y1="290.5" x2="1206.2" y2="299.4" stroke="#3a4a5a" stroke-width="0.5" opacity="0.4"/><line x1="1302.7" y1="364.2" x2="1300.8" y2="369.0" stroke="#5a4a3a" stroke-width="0.5" opacity="0.4"/><line x1="1454.5" y1="441.6" x2="1459.9" y2="442.7" stroke="#a05a40" stroke-width="0.5" opacity="0.4"/><line x1="1351.9" y1="487.7" x2="1354.3" y2="495.1" stroke="#6a5040" stroke-width="0.5" opacity="0.4"/><line x1="1404.4" y1="384.4" x2="1418.7" y2="386.8" stroke="#6a5040" stroke-width="0.5" opacity="0.4"/><line x1="1304.7" y1="209.0" x2="1293.4" y2="219.2" stroke="#3a4a5a" stroke-width="0.5" opacity="0.4"/><line x1="1295.6" y1="378.8" x2="1285.6" y2="380.6" stroke="#3a4a5a" stroke-width="0.5" opacity="0.4"/><line x1="1323.1" y1="272.4" x2="1334.8" y2="272.9" stroke="#a05a40" stroke-width="0.5" opacity="0.4"/><line x1="1287.7" y1="422.5" x2="1294.9" y2="426.0" stroke="#3a4a5a" stroke-width="0.5" opacity="0.4"/><line x1="1229.3" y1="378.6" x2="1215.5" y2="385.8" stroke="#3a4a5a" stroke-width="0.5" opacity="0.4"/><line x1="1364.2" y1="219.3" x2="1358.1" y2="220.5" stroke="#6a5040" stroke-width="0.5" opacity="0.4"/><line x1="1190.4" y1="309.5" x2="1179.6" y2="322.1" stroke="#5a4a3a" stroke-width="0.5" opacity="0.4"/><line x1="1489.4" y1="570.9" x2="1482.5" y2="582.3" stroke="#6a5040" stroke-width="0.5" opacity="0.4"/><line x1="1358.2" y1="476.3" x2="1363.8" y2="484.4" stroke="#3a4a5a" stroke-width="0.5" opacity="0.4"/><line x1="1317.6" y1="393.4" x2="1330.2" y2="394.4" stroke="#a05a40" stroke-width="0.5" opacity="0.4"/><line x1="1324.9" y1="397.2" x2="1319.2" y2="411.6" stroke="#3a4a5a" stroke-width="0.5" opacity="0.4"/><line x1="1340.2" y1="489.5" x2="1346.0" y2="490.2" stroke="#6a5040" stroke-width="0.5" opacity="0.4"/><line x1="1447.6" y1="425.5" x2="1458.5" y2="427.4" stroke="#a05a40" stroke-width="0.5" opacity="0.4"/><line x1="1152.2" y1="230.1" x2="1147.4" y2="243.0" stroke="#5a4a3a" stroke-width="0.5" opacity="0.4"/><line x1="1340.9" y1="341.1" x2="1347.4" y2="341.8" stroke="#3a4a5a" stroke-width="0.5" opacity="0.4"/><line x1="1392.2" y1="323.1" x2="1396.9" y2="331.1" stroke="#6a5040" stroke-width="0.5" opacity="0.4"/><line x1="1392.1" y1="358.9" x2="1381.2" y2="363.5" stroke="#5a4a3a" stroke-width="0.5" opacity="0.4"/><line x1="1478.6" y1="524.9" x2="1482.3" y2="533.5" stroke="#6a5040" stroke-width="0.5" opacity="0.4"/><line x1="1368.9" y1="359.2" x2="1361.4" y2="366.0" stroke="#3a4a5a" stroke-width="0.5" opacity="0.4"/><line x1="1258.5" y1="427.6" x2="1268.3" y2="442.1" stroke="#6a5040" stroke-width="0.5" opacity="0.4"/><line x1="1430.1" y1="529.0" x2="1436.3" y2="534.2" stroke="#a05a40" stroke-width="0.5" opacity="0.4"/><line x1="1306.2" y1="360.8" x2="1316.9" y2="362.5" stroke="#5a4a3a" stroke-width="0.5" opacity="0.4"/><line x1="1281.5" y1="247.7" x2="1284.6" y2="254.1" stroke="#6a5040" stroke-width="0.5" opacity="0.4"/><line x1="1387.2" y1="409.5" x2="1402.8" y2="416.5" stroke="#3a4a5a" stroke-width="0.5" opacity="0.4"/><line x1="1420.0" y1="398.9" x2="1425.9" y2="400.1" stroke="#6a5040" stroke-width="0.5" opacity="0.4"/><line x1="1300.0" y1="317.0" x2="1313.0" y2="317.5" stroke="#6a5040" stroke-width="0.5" opacity="0.4"/><line x1="1375.7" y1="454.9" x2="1372.2" y2="465.6" stroke="#a05a40" stroke-width="0.5" opacity="0.4"/><line x1="1301.6" y1="305.3" x2="1316.2" y2="308.1" stroke="#5a4a3a" stroke-width="0.5" opacity="0.4"/><line x1="1382.8" y1="489.3" x2="1390.7" y2="495.0" stroke="#a05a40" stroke-width="0.5" opacity="0.4"/><line x1="1434.9" y1="405.3" x2="1427.7" y2="412.7" stroke="#3a4a5a" stroke-width="0.5" opacity="0.4"/><line x1="1408.9" y1="502.0" x2="1391.9" y2="506.6" stroke="#6a5040" stroke-width="0.5" opacity="0.4"/><line x1="1148.0" y1="315.3" x2="1158.6" y2="325.0" stroke="#3a4a5a" stroke-width="0.5" opacity="0.4"/><line x1="1389.9" y1="505.2" x2="1381.1" y2="520.5" stroke="#a05a40" stroke-width="0.5" opacity="0.4"/><line x1="1327.6" y1="433.9" x2="1331.9" y2="434.0" stroke="#3a4a5a" stroke-width="0.5" opacity="0.4"/><line x1="1366.1" y1="336.1" x2="1376.1" y2="344.0" stroke="#5a4a3a" stroke-width="0.5" opacity="0.4"/><line x1="1154.9" y1="250.1" x2="1152.6" y2="255.9" stroke="#3a4a5a" stroke-width="0.5" opacity="0.4"/><line x1="1158.8" y1="230.8" x2="1174.6" y2="233.1" stroke="#6a5040" stroke-width="0.5" opacity="0.4"/><line x1="1351.8" y1="492.6" x2="1338.3" y2="497.9" stroke="#a05a40" stroke-width="0.5" opacity="0.4"/><line x1="1184.1" y1="291.3" x2="1188.3" y2="292.9" stroke="#5a4a3a" stroke-width="0.5" opacity="0.4"/><line x1="1466.2" y1="478.2" x2="1469.6" y2="482.5" stroke="#5a4a3a" stroke-width="0.5" opacity="0.4"/><line x1="1453.2" y1="484.7" x2="1458.5" y2="491.7" stroke="#6a5040" stroke-width="0.5" opacity="0.4"/><line x1="1150.2" y1="313.7" x2="1159.1" y2="324.6" stroke="#6a5040" stroke-width="0.5" opacity="0.4"/><line x1="1499.8" y1="538.7" x2="1496.4" y2="548.8" stroke="#6a5040" stroke-width="0.5" opacity="0.4"/><line x1="1304.3" y1="392.6" x2="1297.6" y2="398.4" stroke="#5a4a3a" stroke-width="0.5" opacity="0.4"/><line x1="1353.4" y1="296.1" x2="1348.6" y2="298.3" stroke="#6a5040" stroke-width="0.5" opacity="0.4"/><line x1="1209.0" y1="201.6" x2="1220.8" y2="210.3" stroke="#5a4a3a" stroke-width="0.5" opacity="0.4"/><line x1="1388.8" y1="357.1" x2="1391.7" y2="366.2" stroke="#5a4a3a" stroke-width="0.5" opacity="0.4"/><line x1="1288.2" y1="334.1" x2="1290.8" y2="345.4" stroke="#3a4a5a" stroke-width="0.5" opacity="0.4"/><line x1="1233.8" y1="403.3" x2="1232.4" y2="417.8" stroke="#5a4a3a" stroke-width="0.5" opacity="0.4"/><line x1="1279.0" y1="344.4" x2="1292.9" y2="351.8" stroke="#6a5040" stroke-width="0.5" opacity="0.4"/><line x1="1446.0" y1="455.3" x2="1455.6" y2="459.3" stroke="#3a4a5a" stroke-width="0.5" opacity="0.4"/></svg>
<div class="a" style="left:921px;top:673px;width:251px;height:253px;border:3px solid #c4c4c4"></div>
<div class="a" style="left:1177px;top:673px;width:251px;height:253px;border:3px solid #c4c4c4"></div>
<div class="a" style="left:1433px;top:673px;width:251px;height:253px;border:3px solid #c4c4c4"></div>

<!-- status bar -->
<div class="a" style="left:0;top:1013px;width:1920px;height:19px;background:#f0f0f0"></div>
<div class="sp" style="left:0;width:99px"><span style="left:6px">MapsID: 4008</span></div>
<div class="sp" style="left:102px;width:77px"><span>png</span></div>
<div class="sp" style="left:182px;width:97px"><span>MinZoom: 10</span></div>
<div class="sp" style="left:282px;width:97px"><span>MaxZoom: 18</span></div>
<div class="sp" style="left:382px;width:97px"><span>TileSize: 256</span></div>
<div class="sp" style="left:482px;width:97px"><span>EPSG:3857</span></div>
<div class="sp" style="left:582px;width:1338px"><span style="font-size:13px">Longitude=-75.756226, Latitude=36.299632, tile=10/296/401.png</span></div>

</body></html>
